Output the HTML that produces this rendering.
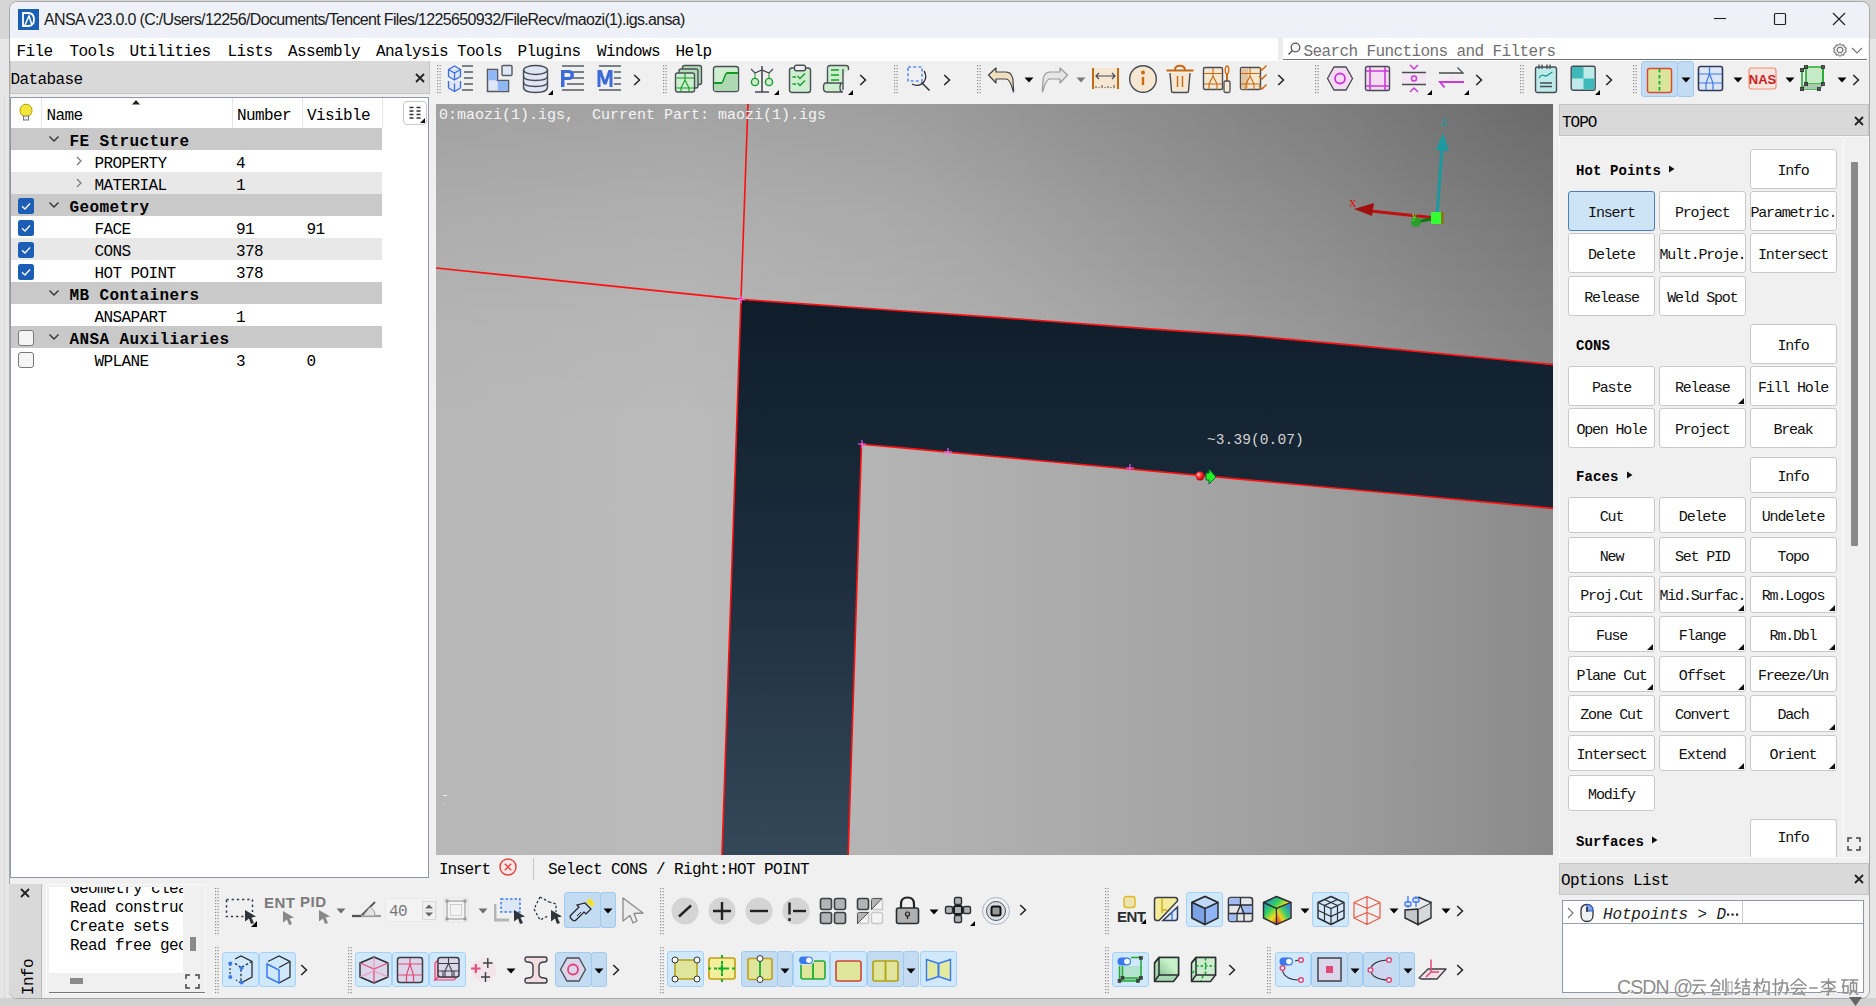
<!DOCTYPE html><html><head><meta charset="utf-8"><style>
*{margin:0;padding:0;box-sizing:border-box}
html,body{width:1876px;height:1006px;overflow:hidden;background:#e6e6e6;position:relative}
div{position:absolute}
.t{white-space:pre;font-family:"Liberation Mono",monospace;font-size:16px;letter-spacing:-0.6px;line-height:20px;color:#000}
.s{white-space:pre;font-family:"Liberation Sans",sans-serif;color:#000}
.b{font-weight:bold}
.btn{background:#fff;border:1px solid #c9c9c9;border-radius:3px;text-align:center;white-space:pre;font-family:"Liberation Mono",monospace;font-size:15px;letter-spacing:-1.2px;color:#111}
.grip{width:3px;background-image:radial-gradient(circle,#9a9a9a 0.8px,transparent 1px);background-size:3px 4px}
</style></head><body><div style="left:0px;top:0px;width:1876px;height:39px;background:#d6d6d6;"></div>
<div style="left:4px;top:95px;width:1px;height:911px;background:#d8d8d8;"></div>
<div style="left:0px;top:998px;width:1876px;height:8px;background:#d2d2d2;"></div>
<div style="left:9px;top:1px;width:1861px;height:998px;background:#f0f0f0;border:1px solid #a9a9a9;border-radius:8px 8px 8px 8px;"></div>
<div style="left:10px;top:2px;width:1858px;height:36px;background:#eef1f7;border-radius:7px 7px 0 0;"></div>
<div style="left:10px;top:38px;width:1858px;height:23px;background:#fff;"></div>
<div style="left:10px;top:61px;width:420px;height:1px;background:#cfcfcf;"></div>
<div style="left:10px;top:61px;width:420px;height:33px;background:#d9d9d9;border:1px solid #c4c4c4;border-top:none;"></div>
<div style="left:10px;top:97px;width:419px;height:781px;background:#fff;border:1px solid #8d97a6;"></div>
<div style="left:430px;top:61px;width:1438px;height:43px;background:#f0f0f0;"></div>
<div style="left:436px;top:104px;width:1117px;height:751px;background:radial-gradient(ellipse 650px 330px at 100% 0%, rgba(0,0,0,0.13), rgba(0,0,0,0) 100%),linear-gradient(to bottom, rgba(0,0,0,0.12) 0px, rgba(0,0,0,0.06) 110px, rgba(0,0,0,0.02) 220px, rgba(0,0,0,0) 320px),linear-gradient(to right, #b7b7b7 0%, #bababa 22%, #b4b4b4 40%, #a9a9a9 60%, #9d9d9d 80%, #8a8a8a 100%);overflow:hidden;"><svg width="1117" height="751" viewBox="0 0 1117 751" style="position:absolute;left:0;top:0;overflow:hidden"><defs><linearGradient id="dk" x1="0" y1="195" x2="0" y2="751" gradientUnits="userSpaceOnUse"><stop offset="0" stop-color="#0f1d2b"/><stop offset="0.5" stop-color="#1d2d3d"/><stop offset="1" stop-color="#34485a"/></linearGradient></defs><polygon points="305.0,195.4 464.0,206.7 564.0,213.6 714.0,224.9 814.0,231.8 914.0,240.9 1117.0,260.6 1126.0,261.5 1126.0,405.3 1117.0,404.4 964.0,390.0 564.0,353.0 464.0,343.6 425.5,340.3 412.2,751.0 412.0,758.0 285.8,758.0 286.0,751.0" fill="url(#dk)" stroke="#ff1010" stroke-width="1.6"/><polyline points="312.0,-1.0 305.0,195.4" fill="none" stroke="#ff1010" stroke-width="1.6"/><polyline points="0.0,164.0 305.0,195.4" fill="none" stroke="#ff1010" stroke-width="1.6"/><path d="M301,195.5H309M305,191.5V199.5" stroke="#ff66ff" stroke-width="1"/><path d="M422,340H430M426,336V344" stroke="#ff66ff" stroke-width="1"/><path d="M508,348H516M512,344V352" stroke="#ff66ff" stroke-width="1"/><path d="M690,364H698M694,360V368" stroke="#ff66ff" stroke-width="1"/><defs><radialGradient id="rs" cx="0.35" cy="0.35" r="0.7"><stop offset="0" stop-color="#ffd0d0"/><stop offset="0.4" stop-color="#ff3030"/><stop offset="1" stop-color="#a00000"/></radialGradient></defs><circle cx="764" cy="372" r="4.5" fill="url(#rs)"/><path d="M770,369L773,369L773,365L780,373L773,380L773,376L770,376Z" fill="#22ee22" stroke="#063" stroke-width="1"/><path d="M1000,114L935,107" stroke="#c01010" stroke-width="3"/><path d="M918,105L938,99L936,112Z" fill="#a01010"/><path d="M1001,112L1006,44" stroke="#1a9aa0" stroke-width="3"/><path d="M1007,29L1013,47L1000,46Z" fill="#1a9aa0"/><path d="M980,118L1000,114" stroke="#0a7a0a" stroke-width="3"/><circle cx="980" cy="118" r="5" fill="#2aa02a"/><rect x="995" y="108" width="12" height="12" fill="#33ff33"/><rect x="1005" y="108" width="3" height="12" fill="#887722"/><text x="913" y="103" font-family="Liberation Serif" font-size="15" fill="#e01010">x</text><text x="1005" y="22" font-family="Liberation Serif" font-size="15" fill="#1a9aa0">z</text><text x="976" y="115" font-family="Liberation Serif" font-size="10" fill="#40ff40">y</text><path d="M7,691.5H11M7,699.5H8" stroke="#f0f0f0" stroke-width="1"/></svg><div class="t" style="left:3px;top:2px;font-size:15px;letter-spacing:0px;color:#f4f4f4">0:maozi(1).igs,  Current Part: maozi(1).igs</div><div class="t" style="left:771px;top:326px;font-size:14.5px;letter-spacing:0.1px;color:#d4d4d4">~3.39(0.07)</div></div>
<div style="left:1559px;top:104px;width:310px;height:32px;background:#d9d9d9;border:1px solid #c4c4c4;"></div>
<div style="left:1559px;top:136px;width:310px;height:722px;background:#f0f0f0;border:1px solid #fafafa;"></div>
<div style="left:1559px;top:863px;width:310px;height:32px;background:#d9d9d9;border:1px solid #c4c4c4;"></div>
<div style="left:1562px;top:900px;width:302px;height:93px;background:#fff;border:1px solid #8d97a6;"></div>
<div style="left:9px;top:884px;width:33px;height:114px;background:#d9d9d9;border-right:1px solid #b9b9b9;border-radius:0 0 0 8px;"></div>
<div style="left:46px;top:884px;width:160px;height:110px;background:#f0f0f0;border:1px solid #fafafa;"></div>
<div style="left:49px;top:887px;width:134px;height:86px;background:#fff;"></div>
<svg style="position:absolute;left:18px;top:9px;" width="21" height="21" viewBox="0 0 21 21"><rect width="21" height="21" fill="#1b5fb5"/><path d="M5,4H10C15,4 16,8 16,10.5C16,13 15,17 10,17H5Z" fill="none" stroke="#fff" stroke-width="1.8"/><path d="M7,16L11,7L14,16" fill="none" stroke="#fff" stroke-width="1.5"/></svg>
<div class="s" style="left:44px;top:9.5px;font-size:16px;letter-spacing:-0.66px;line-height:20px;color:#1a1a1a">ANSA v23.0.0 (C:/Users/12256/Documents/Tencent Files/1225650932/FileRecv/maozi(1).igs.ansa)</div>
<svg style="position:absolute;left:1710px;top:10px;" width="20" height="16" viewBox="0 0 20 16"><path d="M4,8.5H16" stroke="#222" stroke-width="1.1"/></svg>
<svg style="position:absolute;left:1770px;top:9px;" width="20" height="20" viewBox="0 0 20 20"><rect x="4.5" y="4.5" width="11" height="11" rx="1" fill="none" stroke="#222" stroke-width="1.2"/></svg>
<svg style="position:absolute;left:1828px;top:8px;" width="22" height="22" viewBox="0 0 22 22"><path d="M5,5L17,17M17,5L5,17" stroke="#222" stroke-width="1.2"/></svg>
<div class="t" style="left:16.5px;top:41.5px;font-size:16px;letter-spacing:-0.6px;">File</div>
<div class="t" style="left:69.5px;top:41.5px;font-size:16px;letter-spacing:-0.6px;">Tools</div>
<div class="t" style="left:129.5px;top:41.5px;font-size:16px;letter-spacing:-0.6px;">Utilities</div>
<div class="t" style="left:227.5px;top:41.5px;font-size:16px;letter-spacing:-0.6px;">Lists</div>
<div class="t" style="left:288px;top:41.5px;font-size:16px;letter-spacing:-0.6px;">Assembly</div>
<div class="t" style="left:376px;top:41.5px;font-size:16px;letter-spacing:-0.6px;">Analysis Tools</div>
<div class="t" style="left:517.5px;top:41.5px;font-size:16px;letter-spacing:-0.6px;">Plugins</div>
<div class="t" style="left:597px;top:41.5px;font-size:16px;letter-spacing:-0.6px;">Windows</div>
<div class="t" style="left:675.5px;top:41.5px;font-size:16px;letter-spacing:-0.6px;">Help</div>
<div style="left:1278px;top:38px;width:5px;height:22px;background:#ececec;"></div>
<div style="left:1283px;top:39px;width:584px;height:21px;background:#fff;border-bottom:1.5px solid #707070;border-radius:3px 3px 0 0;"></div>
<svg style="position:absolute;left:1286px;top:41px;" width="16" height="16" viewBox="0 0 16 16"><circle cx="9.5" cy="6.5" r="4.3" fill="#f4f6f8" stroke="#555" stroke-width="1.3"/><path d="M6.5,9.5L2.5,13.5" stroke="#555" stroke-width="1.5"/></svg>
<div class="t" style="left:1303.5px;top:42px;font-size:16px;letter-spacing:-0.6px;color:#707070;">Search Functions and Filters</div>
<svg style="position:absolute;left:1832px;top:42px;" width="16" height="16" viewBox="0 0 16 16"><path d="M8,1.5L9.5,3.2L11.8,2.8L12.3,5L14.4,6L13.5,8L14.4,10L12.3,11L11.8,13.2L9.5,12.8L8,14.5L6.5,12.8L4.2,13.2L3.7,11L1.6,10L2.5,8L1.6,6L3.7,5L4.2,2.8L6.5,3.2Z" fill="#e8e8e8" stroke="#666" stroke-width="1"/><circle cx="8" cy="8" r="2.8" fill="#f5f5f5" stroke="#666" stroke-width="1"/></svg>
<svg style="position:absolute;left:1850px;top:43px;" width="14" height="14" viewBox="0 0 14 14"><path d="M2,5L7,10L12,5" fill="none" stroke="#777" stroke-width="1.2"/></svg>
<div class="t" style="left:10.5px;top:70px;font-size:16px;letter-spacing:-0.6px;">Database</div>
<svg style="position:absolute;left:413px;top:71px;" width="14" height="14" viewBox="0 0 14 14"><path d="M3,3L11,11M11,3L3,11" stroke="#222" stroke-width="1.8"/></svg>
<div style="left:41px;top:98px;width:1px;height:30px;background:#e6e6e6;"></div>
<div style="left:232px;top:98px;width:1px;height:30px;background:#e6e6e6;"></div>
<div style="left:302px;top:98px;width:1px;height:30px;background:#e6e6e6;"></div>
<div style="left:382px;top:98px;width:1px;height:30px;background:#e6e6e6;"></div>
<svg style="position:absolute;left:18px;top:103px;" width="16" height="21" viewBox="0 0 16 21"><ellipse cx="8" cy="7.5" rx="6" ry="6.3" fill="#f5e63a" stroke="#b59f10" stroke-width="1"/><rect x="5.5" y="13" width="5" height="4" fill="#eee" stroke="#777" stroke-width="1"/></svg>
<div class="t" style="left:46.5px;top:105.5px;font-size:16px;letter-spacing:-0.6px;">Name</div>
<div class="t" style="left:237px;top:105.5px;font-size:16px;letter-spacing:-0.6px;">Number</div>
<div class="t" style="left:307px;top:105.5px;font-size:16px;letter-spacing:-0.6px;">Visible</div>
<svg style="position:absolute;left:131px;top:99px;" width="10" height="6" viewBox="0 0 10 6"><path d="M1,5.5L5,1L9,5.5Z" fill="#222"/></svg>
<div style="left:403px;top:101px;width:24px;height:24px;background:#fff;border:1px solid #c8c8c8;border-radius:4px;"></div>
<svg style="position:absolute;left:406px;top:104px;" width="20" height="20" viewBox="0 0 20 20"><path d="M3.5,3.5H7.5M3.5,7H7.5M3.5,10.5H7.5M3.5,14H7.5M10.5,3.5H14.5M10.5,7H14.5M10.5,10.5H14.5M10.5,14H14.5" stroke="#333" stroke-width="1.3"/><path d="M19,14L19,19L14,19Z" fill="#111"/></svg>
<div style="left:11px;top:128px;width:371px;height:22px;background:#c9c9c9;"></div>
<svg style="position:absolute;left:47px;top:134px;" width="14" height="10" viewBox="0 0 14 10"><path d="M2.5,2.5L7,7L11.5,2.5" fill="none" stroke="#333" stroke-width="1.4"/></svg>
<div class="t" style="left:69.5px;top:131.5px;font-size:16px;letter-spacing:0.4px;font-weight:bold;">FE Structure</div>
<svg style="position:absolute;left:74px;top:155px;" width="10" height="12" viewBox="0 0 10 12"><path d="M3,2L7,6L3,10" fill="none" stroke="#777" stroke-width="1.2"/></svg>
<div class="t" style="left:94.5px;top:153.5px;font-size:16px;letter-spacing:-0.6px;">PROPERTY</div>
<div class="t" style="left:236px;top:153.5px;font-size:16px;letter-spacing:-0.6px;">4</div>
<div style="left:11px;top:172px;width:371px;height:22px;background:#e8e8e8;"></div>
<svg style="position:absolute;left:74px;top:177px;" width="10" height="12" viewBox="0 0 10 12"><path d="M3,2L7,6L3,10" fill="none" stroke="#777" stroke-width="1.2"/></svg>
<div class="t" style="left:94.5px;top:175.5px;font-size:16px;letter-spacing:-0.6px;">MATERIAL</div>
<div class="t" style="left:236px;top:175.5px;font-size:16px;letter-spacing:-0.6px;">1</div>
<div style="left:11px;top:194px;width:371px;height:22px;background:#c9c9c9;"></div>
<svg style="position:absolute;left:17px;top:197px;" width="18" height="18" viewBox="0 0 18 18"><rect x="1" y="1" width="16" height="16" rx="2.5" fill="#1c5db5"/><path d="M5,9.2L8,12L13,6.5" fill="none" stroke="#fff" stroke-width="1.3"/></svg>
<svg style="position:absolute;left:47px;top:200px;" width="14" height="10" viewBox="0 0 14 10"><path d="M2.5,2.5L7,7L11.5,2.5" fill="none" stroke="#333" stroke-width="1.4"/></svg>
<div class="t" style="left:69.5px;top:197.5px;font-size:16px;letter-spacing:0.4px;font-weight:bold;">Geometry</div>
<svg style="position:absolute;left:17px;top:219px;" width="18" height="18" viewBox="0 0 18 18"><rect x="1" y="1" width="16" height="16" rx="2.5" fill="#1c5db5"/><path d="M5,9.2L8,12L13,6.5" fill="none" stroke="#fff" stroke-width="1.3"/></svg>
<div class="t" style="left:94.5px;top:219.5px;font-size:16px;letter-spacing:-0.6px;">FACE</div>
<div class="t" style="left:236px;top:219.5px;font-size:16px;letter-spacing:-0.6px;">91</div>
<div class="t" style="left:306.5px;top:219.5px;font-size:16px;letter-spacing:-0.6px;">91</div>
<div style="left:11px;top:238px;width:371px;height:22px;background:#e8e8e8;"></div>
<svg style="position:absolute;left:17px;top:241px;" width="18" height="18" viewBox="0 0 18 18"><rect x="1" y="1" width="16" height="16" rx="2.5" fill="#1c5db5"/><path d="M5,9.2L8,12L13,6.5" fill="none" stroke="#fff" stroke-width="1.3"/></svg>
<div class="t" style="left:94.5px;top:241.5px;font-size:16px;letter-spacing:-0.6px;">CONS</div>
<div class="t" style="left:236px;top:241.5px;font-size:16px;letter-spacing:-0.6px;">378</div>
<svg style="position:absolute;left:17px;top:263px;" width="18" height="18" viewBox="0 0 18 18"><rect x="1" y="1" width="16" height="16" rx="2.5" fill="#1c5db5"/><path d="M5,9.2L8,12L13,6.5" fill="none" stroke="#fff" stroke-width="1.3"/></svg>
<div class="t" style="left:94.5px;top:263.5px;font-size:16px;letter-spacing:-0.6px;">HOT POINT</div>
<div class="t" style="left:236px;top:263.5px;font-size:16px;letter-spacing:-0.6px;">378</div>
<div style="left:11px;top:282px;width:371px;height:22px;background:#c9c9c9;"></div>
<svg style="position:absolute;left:47px;top:288px;" width="14" height="10" viewBox="0 0 14 10"><path d="M2.5,2.5L7,7L11.5,2.5" fill="none" stroke="#333" stroke-width="1.4"/></svg>
<div class="t" style="left:69.5px;top:285.5px;font-size:16px;letter-spacing:0.4px;font-weight:bold;">MB Containers</div>
<div class="t" style="left:94.5px;top:307.5px;font-size:16px;letter-spacing:-0.6px;">ANSAPART</div>
<div class="t" style="left:236px;top:307.5px;font-size:16px;letter-spacing:-0.6px;">1</div>
<div style="left:11px;top:326px;width:371px;height:22px;background:#c9c9c9;"></div>
<svg style="position:absolute;left:17px;top:329px;" width="18" height="18" viewBox="0 0 18 18"><rect x="1.5" y="1.5" width="15" height="15" rx="2.5" fill="#f5f5f5" stroke="#7a7a7a" stroke-width="1"/></svg>
<svg style="position:absolute;left:47px;top:332px;" width="14" height="10" viewBox="0 0 14 10"><path d="M2.5,2.5L7,7L11.5,2.5" fill="none" stroke="#333" stroke-width="1.4"/></svg>
<div class="t" style="left:69.5px;top:329.5px;font-size:16px;letter-spacing:0.4px;font-weight:bold;">ANSA Auxiliaries</div>
<svg style="position:absolute;left:17px;top:351px;" width="18" height="18" viewBox="0 0 18 18"><rect x="1.5" y="1.5" width="15" height="15" rx="2.5" fill="#f5f5f5" stroke="#7a7a7a" stroke-width="1"/></svg>
<div class="t" style="left:94.5px;top:351.5px;font-size:16px;letter-spacing:-0.6px;">WPLANE</div>
<div class="t" style="left:236px;top:351.5px;font-size:16px;letter-spacing:-0.6px;">3</div>
<div class="t" style="left:306.5px;top:351.5px;font-size:16px;letter-spacing:-0.6px;">0</div>
<div class="t" style="left:1562px;top:113px;font-size:16px;letter-spacing:-1px;">TOPO</div>
<svg style="position:absolute;left:1852px;top:114px;" width="14" height="14" viewBox="0 0 14 14"><path d="M3,3L11,11M11,3L3,11" stroke="#222" stroke-width="1.8"/></svg>
<div style="left:1561px;top:138px;width:283px;height:717px;border-right:1px solid #fafafa;"></div>
<div style="left:1851px;top:162px;width:7px;height:384px;background:#8a8a8a;border-radius:1px;"></div>
<div class="t" style="left:1576px;top:161px;font-size:14px;letter-spacing:0.1px;font-weight:bold;">Hot Points</div>
<svg style="position:absolute;left:1668.0px;top:164px;" width="8" height="10" viewBox="0 0 8 10"><path d="M1,1.5L6.5,5L1,8.5Z" fill="#111"/></svg>
<div class="btn" style="left:1749.5px;top:148.5px;width:87px;height:40px;line-height:43px;">Info</div>
<div class="btn" style="left:1568px;top:191px;width:87px;height:40px;background:#cde4f7;border-color:#4a7fb5;line-height:43px;">Insert</div>
<div class="btn" style="left:1658.5px;top:191px;width:87.5px;height:40px;line-height:43px;">Project</div>
<div class="btn" style="left:1749.5px;top:191px;width:87px;height:40px;line-height:43px;">Parametric.</div>
<div class="btn" style="left:1568px;top:233px;width:87px;height:40px;line-height:43px;">Delete</div>
<div class="btn" style="left:1658.5px;top:233px;width:87.5px;height:40px;line-height:43px;">Mult.Proje.</div>
<div class="btn" style="left:1749.5px;top:233px;width:87px;height:40px;line-height:43px;">Intersect</div>
<div class="btn" style="left:1568px;top:275.5px;width:87px;height:40px;line-height:43px;">Release</div>
<div class="btn" style="left:1658.5px;top:275.5px;width:87.5px;height:40px;line-height:43px;">Weld Spot</div>
<div class="t" style="left:1576px;top:336px;font-size:14px;letter-spacing:0.1px;font-weight:bold;">CONS</div>
<div class="btn" style="left:1749.5px;top:323.5px;width:87px;height:40px;line-height:43px;">Info</div>
<div class="btn" style="left:1568px;top:366px;width:87px;height:40px;line-height:43px;">Paste</div>
<div class="btn" style="left:1658.5px;top:366px;width:87.5px;height:40px;line-height:43px;">Release</div>
<svg style="position:absolute;left:1737.0px;top:397px;" width="7" height="7" viewBox="0 0 7 7"><path d="M7,1L7,7L1,7Z" fill="#111"/></svg>
<div class="btn" style="left:1749.5px;top:366px;width:87px;height:40px;line-height:43px;">Fill Hole</div>
<div class="btn" style="left:1568px;top:408px;width:87px;height:40px;line-height:43px;">Open Hole</div>
<div class="btn" style="left:1658.5px;top:408px;width:87.5px;height:40px;line-height:43px;">Project</div>
<div class="btn" style="left:1749.5px;top:408px;width:87px;height:40px;line-height:43px;">Break</div>
<div class="t" style="left:1576px;top:467px;font-size:14px;letter-spacing:0.1px;font-weight:bold;">Faces</div>
<svg style="position:absolute;left:1625.5px;top:470px;" width="8" height="10" viewBox="0 0 8 10"><path d="M1,1.5L6.5,5L1,8.5Z" fill="#111"/></svg>
<div class="btn" style="left:1749.5px;top:456.5px;width:87px;height:36.5px;line-height:39.5px;">Info</div>
<div class="btn" style="left:1568px;top:496.5px;width:87px;height:36.5px;line-height:39.5px;">Cut</div>
<div class="btn" style="left:1658.5px;top:496.5px;width:87.5px;height:36.5px;line-height:39.5px;">Delete</div>
<div class="btn" style="left:1749.5px;top:496.5px;width:87px;height:36.5px;line-height:39.5px;">Undelete</div>
<div class="btn" style="left:1568px;top:536.5px;width:87px;height:36.5px;line-height:39.5px;">New</div>
<div class="btn" style="left:1658.5px;top:536.5px;width:87.5px;height:36.5px;line-height:39.5px;">Set PID</div>
<div class="btn" style="left:1749.5px;top:536.5px;width:87px;height:36.5px;line-height:39.5px;">Topo</div>
<div class="btn" style="left:1568px;top:576px;width:87px;height:36.5px;line-height:39.5px;">Proj.Cut</div>
<div class="btn" style="left:1658.5px;top:576px;width:87.5px;height:36.5px;line-height:39.5px;">Mid.Surfac.</div>
<svg style="position:absolute;left:1737.0px;top:603.5px;" width="7" height="7" viewBox="0 0 7 7"><path d="M7,1L7,7L1,7Z" fill="#111"/></svg>
<div class="btn" style="left:1749.5px;top:576px;width:87px;height:36.5px;line-height:39.5px;">Rm.Logos</div>
<svg style="position:absolute;left:1827.5px;top:603.5px;" width="7" height="7" viewBox="0 0 7 7"><path d="M7,1L7,7L1,7Z" fill="#111"/></svg>
<div class="btn" style="left:1568px;top:615.5px;width:87px;height:36.5px;line-height:39.5px;">Fuse</div>
<svg style="position:absolute;left:1646px;top:643.0px;" width="7" height="7" viewBox="0 0 7 7"><path d="M7,1L7,7L1,7Z" fill="#111"/></svg>
<div class="btn" style="left:1658.5px;top:615.5px;width:87.5px;height:36.5px;line-height:39.5px;">Flange</div>
<svg style="position:absolute;left:1737.0px;top:643.0px;" width="7" height="7" viewBox="0 0 7 7"><path d="M7,1L7,7L1,7Z" fill="#111"/></svg>
<div class="btn" style="left:1749.5px;top:615.5px;width:87px;height:36.5px;line-height:39.5px;">Rm.Dbl</div>
<svg style="position:absolute;left:1827.5px;top:643.0px;" width="7" height="7" viewBox="0 0 7 7"><path d="M7,1L7,7L1,7Z" fill="#111"/></svg>
<div class="btn" style="left:1568px;top:655.5px;width:87px;height:36.5px;line-height:39.5px;">Plane Cut</div>
<svg style="position:absolute;left:1646px;top:683.0px;" width="7" height="7" viewBox="0 0 7 7"><path d="M7,1L7,7L1,7Z" fill="#111"/></svg>
<div class="btn" style="left:1658.5px;top:655.5px;width:87.5px;height:36.5px;line-height:39.5px;">Offset</div>
<svg style="position:absolute;left:1737.0px;top:683.0px;" width="7" height="7" viewBox="0 0 7 7"><path d="M7,1L7,7L1,7Z" fill="#111"/></svg>
<div class="btn" style="left:1749.5px;top:655.5px;width:87px;height:36.5px;line-height:39.5px;">Freeze/Un</div>
<div class="btn" style="left:1568px;top:695px;width:87px;height:36.5px;line-height:39.5px;">Zone Cut</div>
<div class="btn" style="left:1658.5px;top:695px;width:87.5px;height:36.5px;line-height:39.5px;">Convert</div>
<div class="btn" style="left:1749.5px;top:695px;width:87px;height:36.5px;line-height:39.5px;">Dach</div>
<svg style="position:absolute;left:1827.5px;top:722.5px;" width="7" height="7" viewBox="0 0 7 7"><path d="M7,1L7,7L1,7Z" fill="#111"/></svg>
<div class="btn" style="left:1568px;top:734.5px;width:87px;height:36.5px;line-height:39.5px;">Intersect</div>
<div class="btn" style="left:1658.5px;top:734.5px;width:87.5px;height:36.5px;line-height:39.5px;">Extend</div>
<svg style="position:absolute;left:1737.0px;top:762.0px;" width="7" height="7" viewBox="0 0 7 7"><path d="M7,1L7,7L1,7Z" fill="#111"/></svg>
<div class="btn" style="left:1749.5px;top:734.5px;width:87px;height:36.5px;line-height:39.5px;">Orient</div>
<svg style="position:absolute;left:1827.5px;top:762.0px;" width="7" height="7" viewBox="0 0 7 7"><path d="M7,1L7,7L1,7Z" fill="#111"/></svg>
<div class="btn" style="left:1568px;top:774.5px;width:87px;height:36.5px;line-height:39.5px;">Modify</div>
<div class="t" style="left:1576px;top:832px;font-size:14px;letter-spacing:0.1px;font-weight:bold;">Surfaces</div>
<svg style="position:absolute;left:1651.0px;top:835px;" width="8" height="10" viewBox="0 0 8 10"><path d="M1,1.5L6.5,5L1,8.5Z" fill="#111"/></svg>
<div class="btn" style="left:1749.5px;top:819px;width:87px;height:38px;border-bottom:none;border-radius:3px 3px 0 0;line-height:38px;">Info</div>
<svg style="position:absolute;left:1846px;top:836px;" width="16" height="16" viewBox="0 0 16 16"><path d="M2,6V2H6M10,2H14V6M14,10V14H10M6,14H2V10" fill="none" stroke="#444" stroke-width="1.5"/></svg>
<div class="t" style="left:1561px;top:871px;font-size:16px;letter-spacing:-0.6px;">Options List</div>
<svg style="position:absolute;left:1852px;top:872px;" width="14" height="14" viewBox="0 0 14 14"><path d="M3,3L11,11M11,3L3,11" stroke="#222" stroke-width="1.8"/></svg>
<div style="left:1563px;top:901px;width:300px;height:23px;border-bottom:1px solid #9aa3b0;"></div>
<div style="left:1742px;top:901px;width:1px;height:23px;background:#c8c8c8;"></div>
<svg style="position:absolute;left:1565px;top:906px;" width="10" height="14" viewBox="0 0 10 14"><path d="M3,2L8,7L3,12" fill="none" stroke="#777" stroke-width="1.2"/></svg>
<svg style="position:absolute;left:1578px;top:903px;" width="18" height="20" viewBox="0 0 18 20"><path d="M9,1.5C5,1.5 3,4 3,8V12C3,16 5.5,18.5 9,18.5C12.5,18.5 15,16 15,12V8C15,4 13,1.5 9,1.5Z" fill="#eef0f4" stroke="#333" stroke-width="1.3"/><path d="M9,1.5C12.5,1.5 15,4 15,8H9Z" fill="#7aa2f0" stroke="#2a5ad0" stroke-width="1"/><path d="M9,4V9" stroke="#333" stroke-width="1.6"/></svg>
<div class="t" style="left:1603px;top:904.5px;font-style:italic;font-size:16px;letter-spacing:-0.15px;color:#222">Hotpoints &gt; D</div>
<svg style="position:absolute;left:1726px;top:912px;" width="16" height="6" viewBox="0 0 16 6"><g fill="#222"><rect x="1" y="1.5" width="2.2" height="2.2"/><rect x="5.5" y="1.5" width="2.2" height="2.2"/><rect x="10" y="1.5" width="2.2" height="2.2"/></g></svg>
<div class="t" style="left:439px;top:860px;font-size:16px;letter-spacing:-1.1px;">Insert</div>
<svg style="position:absolute;left:498px;top:857px;" width="20" height="20" viewBox="0 0 20 20"><circle cx="10" cy="10" r="8" fill="#fde8e8" stroke="#e04848" stroke-width="1.5"/><path d="M6.8,6.8L13.2,13.2M13.2,6.8L6.8,13.2" stroke="#e04848" stroke-width="1.5"/></svg>
<div style="left:533px;top:858px;width:1px;height:22px;background:#c8c8c8;"></div>
<div class="t" style="left:548px;top:860px;font-size:16px;letter-spacing:-0.6px;">Select CONS / Right:HOT POINT</div>
<svg style="position:absolute;left:18px;top:886px;" width="14" height="14" viewBox="0 0 14 14"><path d="M3,3L11,11M11,3L3,11" stroke="#222" stroke-width="1.8"/></svg>
<div class="t" style="left:19px;top:995px;transform:rotate(-90deg);transform-origin:0 0;font-size:16px;letter-spacing:-0.6px">Info</div>
<div style="left:49px;top:887px;width:134px;height:86px;overflow:hidden"><div class="t" style="left:21px;top:-7.5px;line-height:19px">Geometry clean
Read construction
Create sets
Read free geometry</div></div>
<div style="left:190px;top:937px;width:6px;height:14px;background:#8a8a8a;"></div>
<div style="left:70px;top:978px;width:13px;height:6px;background:#8a8a8a;"></div>
<svg style="position:absolute;left:184px;top:973px;" width="18" height="18" viewBox="0 0 18 18"><path d="M2,6V2H6M11,2H15V6M15,11V15H11M6,15H2V11" fill="none" stroke="#444" stroke-width="1.5"/></svg>
<div style="left:49px;top:992px;width:156px;height:1px;background:#777;"></div>
<svg style="position:absolute;left:437.4px;top:65px;" width="4" height="30" viewBox="0 0 4 30"><g fill="#8c8c8c"><rect x="0" y="0" width="1.2" height="1.2"/><rect x="2.5" y="0" width="1.2" height="1.2"/><rect x="0" y="3" width="1.2" height="1.2"/><rect x="2.5" y="3" width="1.2" height="1.2"/><rect x="0" y="6" width="1.2" height="1.2"/><rect x="2.5" y="6" width="1.2" height="1.2"/><rect x="0" y="9" width="1.2" height="1.2"/><rect x="2.5" y="9" width="1.2" height="1.2"/><rect x="0" y="12" width="1.2" height="1.2"/><rect x="2.5" y="12" width="1.2" height="1.2"/><rect x="0" y="15" width="1.2" height="1.2"/><rect x="2.5" y="15" width="1.2" height="1.2"/><rect x="0" y="18" width="1.2" height="1.2"/><rect x="2.5" y="18" width="1.2" height="1.2"/><rect x="0" y="21" width="1.2" height="1.2"/><rect x="2.5" y="21" width="1.2" height="1.2"/><rect x="0" y="24" width="1.2" height="1.2"/><rect x="2.5" y="24" width="1.2" height="1.2"/><rect x="0" y="27" width="1.2" height="1.2"/><rect x="2.5" y="27" width="1.2" height="1.2"/></g></svg>
<svg style="position:absolute;left:447px;top:64px;" width="28" height="30" viewBox="0 0 28 30"><g stroke="#3a6de0" stroke-width="1.3" fill="#dfe7f6"><path d="M1.5,5.5L7.5,2L13.5,5.5V12.5L7.5,16L1.5,12.5Z"/><path d="M1.5,5.5L7.5,9L13.5,5.5M7.5,9V16" fill="none"/><path d="M1.5,17V24L7.5,27.5L13.5,24V17" /><path d="M7.5,19.5V27.5" fill="none"/></g><g stroke="#555a60" stroke-width="1.4"><path d="M15,2H26M17,8H26M17,14H26M17,20H26M15,26H26"/></g></svg>
<svg style="position:absolute;left:486px;top:64px;" width="28" height="30" viewBox="0 0 28 30"><rect x="16" y="1.5" width="10" height="10" rx="1" fill="#dfe7f6" stroke="#555a60" stroke-width="1.4"/><path d="M1.5,5.5H11.5V16.5H22.5V27.5H1.5Z" fill="#dfe7f6" stroke="#555a60" stroke-width="1.5"/><rect x="2.3" y="6.3" width="8.5" height="10" fill="#8fb6f5"/><rect x="11.8" y="17" width="10" height="9.8" fill="#8fb6f5"/></svg>
<svg style="position:absolute;left:522px;top:64px;" width="32" height="32" viewBox="0 0 32 32"><g fill="#dfe7f6" stroke="#474c52" stroke-width="1.4"><path d="M1.5,6V23C1.5,26.5 6.5,28.5 13.5,28.5C20.5,28.5 25.5,26.5 25.5,23V6"/><ellipse cx="13.5" cy="6" rx="12" ry="4.5"/><path d="M1.5,12C1.5,15 6.5,16.5 13.5,16.5C20.5,16.5 25.5,15 25.5,12M1.5,18C1.5,21 6.5,22.5 13.5,22.5C20.5,22.5 25.5,21 25.5,18" fill="none"/></g><path d="M31,26V31H26Z" fill="#000"/></svg>
<svg style="position:absolute;left:559px;top:64px;" width="28" height="30" viewBox="0 0 28 30"><g stroke="#555a60" stroke-width="1.5"><path d="M3,2H25M13,8H25M13,14H25M8,20H25M3,26H25"/></g><path d="M2,23V6H9C13,6 15,8 15,11C15,14 13,16 9,16H5.5V23Z M5.5,9V13H9C11,13 11.5,12 11.5,11C11.5,10 11,9 9,9Z" fill="#3c6bd8" fill-rule="evenodd"/></svg>
<svg style="position:absolute;left:596px;top:64px;" width="28" height="30" viewBox="0 0 28 30"><g stroke="#555a60" stroke-width="1.5"><path d="M3,2H25M18,8H25M18,14H25M18,20H25M3,26H25"/></g><path d="M1.5,23V6H5.5L9,16L12.5,6H16.5V23H13.5V12L10.5,20.5H7.5L4.5,12V23Z" fill="#3c6bd8"/></svg>
<svg style="position:absolute;left:633px;top:74px;" width="8" height="12" viewBox="0 0 8 12"><path d="M1.2,1L6.5,6L1.2,11" fill="none" stroke="#222" stroke-width="1.5"/></svg>
<svg style="position:absolute;left:663.4px;top:65px;" width="4" height="30" viewBox="0 0 4 30"><g fill="#8c8c8c"><rect x="0" y="0" width="1.2" height="1.2"/><rect x="2.5" y="0" width="1.2" height="1.2"/><rect x="0" y="3" width="1.2" height="1.2"/><rect x="2.5" y="3" width="1.2" height="1.2"/><rect x="0" y="6" width="1.2" height="1.2"/><rect x="2.5" y="6" width="1.2" height="1.2"/><rect x="0" y="9" width="1.2" height="1.2"/><rect x="2.5" y="9" width="1.2" height="1.2"/><rect x="0" y="12" width="1.2" height="1.2"/><rect x="2.5" y="12" width="1.2" height="1.2"/><rect x="0" y="15" width="1.2" height="1.2"/><rect x="2.5" y="15" width="1.2" height="1.2"/><rect x="0" y="18" width="1.2" height="1.2"/><rect x="2.5" y="18" width="1.2" height="1.2"/><rect x="0" y="21" width="1.2" height="1.2"/><rect x="2.5" y="21" width="1.2" height="1.2"/><rect x="0" y="24" width="1.2" height="1.2"/><rect x="2.5" y="24" width="1.2" height="1.2"/><rect x="0" y="27" width="1.2" height="1.2"/><rect x="2.5" y="27" width="1.2" height="1.2"/></g></svg>
<svg style="position:absolute;left:674px;top:64px;" width="30" height="30" viewBox="0 0 30 30"><g stroke="#4a4f55" stroke-width="1.4" fill="#b4dcb8"><rect x="8.5" y="1.5" width="19" height="19" rx="2"/><rect x="5" y="5" width="19" height="19" rx="2"/></g><rect x="1.5" y="9" width="19" height="19" rx="2" fill="#cdeecf" stroke="#4a4f55" stroke-width="1.4"/><g stroke="#1a9a2c" stroke-width="1.1" fill="none"><path d="M2,14H20M2,24H20M11,9V16L7,24V28M11,16L15,24V28"/></g></svg>
<svg style="position:absolute;left:712px;top:65px;" width="28" height="28" viewBox="0 0 28 28"><rect x="1.5" y="1.5" width="25" height="25" rx="2.5" fill="#cdeecf" stroke="#4a4f55" stroke-width="1.4"/><path d="M2.2,18H9.5C12,18 12.5,8 15.5,8H26" fill="none" stroke="#0f9a22" stroke-width="1.8"/><path d="M2.2,18.9H9.5C12.5,18.9 13,8.9 15.5,8.9H25.8V25.8H2.2Z" fill="#acd8b2"/></svg>
<svg style="position:absolute;left:748px;top:64px;" width="32" height="32" viewBox="0 0 32 32"><path d="M14,2V28M7,28H21" stroke="#474c52" stroke-width="1.6"/><path d="M3,5L7,9L14,6L21,9L25,5" fill="none" stroke="#474c52" stroke-width="1.2"/><path d="M7,9V14M21,9V14" stroke="#1a9a2c" stroke-width="1"/><circle cx="7" cy="18" r="3.6" fill="#cdeecf" stroke="#1a9a2c" stroke-width="1.4"/><circle cx="21" cy="18" r="3.6" fill="#cdeecf" stroke="#1a9a2c" stroke-width="1.4"/><path d="M31,26V31H26Z" fill="#000"/></svg>
<svg style="position:absolute;left:788px;top:64px;" width="24" height="30" viewBox="0 0 24 30"><rect x="1.5" y="4" width="21" height="24.5" rx="2.5" fill="#cdeecf" stroke="#4a4f55" stroke-width="1.4"/><rect x="6.5" y="1.2" width="11" height="5.5" rx="2" fill="#f0f0f0" stroke="#4a4f55" stroke-width="1.4"/><path d="M4.5,13H8M4.5,20H8" stroke="#1a9a2c" stroke-width="1.4"/><path d="M9.5,12L12,14.5L17,9.5M9.5,19L12,21.5L17,16.5" fill="none" stroke="#1a9a2c" stroke-width="1.4"/></svg>
<svg style="position:absolute;left:822px;top:64px;" width="32" height="32" viewBox="0 0 32 32"><path d="M5.5,24V4C5.5,2.5 6.5,1.5 8,1.5H24C25.5,1.5 26.5,2.5 26.5,4V6" fill="#cdeecf" stroke="#4a4f55" stroke-width="1.4"/><path d="M5.5,4H21V25" fill="#cdeecf" stroke="none"/><path d="M3.5,19H20.5C19,19 18,20.5 18,23.5C18,26.5 19.5,28 21,28H4.5C2.5,28 1.5,26.5 1.5,23.5C1.5,20.5 2.5,19 3.5,19Z" fill="#cdeecf" stroke="#4a4f55" stroke-width="1.4"/><path d="M21,5V26" stroke="#4a4f55" stroke-width="1.4"/><path d="M9,6H17M9,11H17M9,16H17" stroke="#1a9a2c" stroke-width="1.4"/><path d="M31,26V31H26Z" fill="#000"/></svg>
<svg style="position:absolute;left:859px;top:74px;" width="8" height="12" viewBox="0 0 8 12"><path d="M1.2,1L6.5,6L1.2,11" fill="none" stroke="#222" stroke-width="1.5"/></svg>
<svg style="position:absolute;left:894.4px;top:65px;" width="4" height="30" viewBox="0 0 4 30"><g fill="#8c8c8c"><rect x="0" y="0" width="1.2" height="1.2"/><rect x="2.5" y="0" width="1.2" height="1.2"/><rect x="0" y="3" width="1.2" height="1.2"/><rect x="2.5" y="3" width="1.2" height="1.2"/><rect x="0" y="6" width="1.2" height="1.2"/><rect x="2.5" y="6" width="1.2" height="1.2"/><rect x="0" y="9" width="1.2" height="1.2"/><rect x="2.5" y="9" width="1.2" height="1.2"/><rect x="0" y="12" width="1.2" height="1.2"/><rect x="2.5" y="12" width="1.2" height="1.2"/><rect x="0" y="15" width="1.2" height="1.2"/><rect x="2.5" y="15" width="1.2" height="1.2"/><rect x="0" y="18" width="1.2" height="1.2"/><rect x="2.5" y="18" width="1.2" height="1.2"/><rect x="0" y="21" width="1.2" height="1.2"/><rect x="2.5" y="21" width="1.2" height="1.2"/><rect x="0" y="24" width="1.2" height="1.2"/><rect x="2.5" y="24" width="1.2" height="1.2"/><rect x="0" y="27" width="1.2" height="1.2"/><rect x="2.5" y="27" width="1.2" height="1.2"/></g></svg>
<svg style="position:absolute;left:906px;top:65px;" width="28" height="28" viewBox="0 0 28 28"><rect x="2" y="2" width="14" height="14" fill="none" stroke="#5b8df0" stroke-width="1.6" stroke-dasharray="3,2.2"/><path d="M18,6A9,9 0 0 1 6,19" fill="none" stroke="#2a2d30" stroke-width="1.3"/><path d="M15.5,17.5L23.5,25.5" stroke="#2a2d30" stroke-width="1.5"/></svg>
<svg style="position:absolute;left:943px;top:74px;" width="8" height="12" viewBox="0 0 8 12"><path d="M1.2,1L6.5,6L1.2,11" fill="none" stroke="#222" stroke-width="1.5"/></svg>
<svg style="position:absolute;left:977.4px;top:65px;" width="4" height="30" viewBox="0 0 4 30"><g fill="#8c8c8c"><rect x="0" y="0" width="1.2" height="1.2"/><rect x="2.5" y="0" width="1.2" height="1.2"/><rect x="0" y="3" width="1.2" height="1.2"/><rect x="2.5" y="3" width="1.2" height="1.2"/><rect x="0" y="6" width="1.2" height="1.2"/><rect x="2.5" y="6" width="1.2" height="1.2"/><rect x="0" y="9" width="1.2" height="1.2"/><rect x="2.5" y="9" width="1.2" height="1.2"/><rect x="0" y="12" width="1.2" height="1.2"/><rect x="2.5" y="12" width="1.2" height="1.2"/><rect x="0" y="15" width="1.2" height="1.2"/><rect x="2.5" y="15" width="1.2" height="1.2"/><rect x="0" y="18" width="1.2" height="1.2"/><rect x="2.5" y="18" width="1.2" height="1.2"/><rect x="0" y="21" width="1.2" height="1.2"/><rect x="2.5" y="21" width="1.2" height="1.2"/><rect x="0" y="24" width="1.2" height="1.2"/><rect x="2.5" y="24" width="1.2" height="1.2"/><rect x="0" y="27" width="1.2" height="1.2"/><rect x="2.5" y="27" width="1.2" height="1.2"/></g></svg>
<svg style="position:absolute;left:987px;top:67px;" width="30" height="26" viewBox="0 0 30 26"><path d="M1.5,8L9,1V5H19C24,5 26,10 26,14C26,18 27,23 26.5,25C25,22 24,12 19,12H9V16Z" fill="#f2dfbf" stroke="#3f4246" stroke-width="1.2" stroke-linejoin="round"/></svg>
<svg style="position:absolute;left:1024px;top:77px;" width="10" height="6" viewBox="0 0 10 6"><path d="M0.5,0.5H9.5L5,5.5Z" fill="#000"/></svg>
<svg style="position:absolute;left:1039px;top:67px;" width="30" height="26" viewBox="0 0 30 26"><path d="M28.5,8L21,1V5H11C6,5 4,10 4,14C4,18 3,23 3.5,25C5,22 6,12 11,12H21V16Z" fill="#e6e6e6" stroke="#9a9a9a" stroke-width="1.2" stroke-linejoin="round"/></svg>
<svg style="position:absolute;left:1076px;top:77px;" width="10" height="6" viewBox="0 0 10 6"><path d="M0.5,0.5H9.5L5,5.5Z" fill="#7a7a7a"/></svg>
<svg style="position:absolute;left:1091px;top:67px;" width="30" height="24" viewBox="0 0 30 24"><rect x="2" y="1" width="25" height="21" fill="#f5e7d2"/><path d="M2,1V22M27,1V22" stroke="#c9690f" stroke-width="2"/><path d="M5,9H24M8,6L5,9L8,12M21,6L24,9L21,12" fill="none" stroke="#474c52" stroke-width="1.2"/><path d="M5,21V19M8,21V20M11,21V18M14,21V20M17,21V19M20,21V20M23,21V18" stroke="#474c52" stroke-width="1"/></svg>
<svg style="position:absolute;left:1128px;top:64px;" width="30" height="30" viewBox="0 0 30 30"><circle cx="15" cy="15" r="13.3" fill="#f5e7d2" stroke="#474c52" stroke-width="1.4"/><circle cx="15" cy="8.5" r="2" fill="#c9690f"/><path d="M15,13V21" stroke="#c9690f" stroke-width="2.4"/></svg>
<svg style="position:absolute;left:1165px;top:64px;" width="30" height="30" viewBox="0 0 30 30"><path d="M5,9L6.5,27C6.5,28 7,28.5 8,28.5H22C23,28.5 23.5,28 23.5,27L25,9" fill="#f5e7d2" stroke="#474c52" stroke-width="1.4"/><path d="M1.5,6.5H28.5" stroke="#c9690f" stroke-width="2"/><path d="M10,6.5C10,3 11.5,1.8 15,1.8C18.5,1.8 20,3 20,6.5" fill="none" stroke="#c9690f" stroke-width="2"/><path d="M12.5,12V23M17.5,12V23" stroke="#c9690f" stroke-width="1.4"/></svg>
<svg style="position:absolute;left:1202px;top:64px;" width="30" height="30" viewBox="0 0 30 30"><rect x="1.5" y="3.5" width="19" height="22" rx="1.5" fill="#f5e7d2" stroke="#474c52" stroke-width="1.4"/><path d="M2,9.5H20M2,20H20M11,4V12L7,20V25.5M11,12L15,20V25.5" fill="none" stroke="#c9690f" stroke-width="1.1"/><path d="M25,2V17" stroke="#c9690f" stroke-width="2"/><ellipse cx="25" cy="6" rx="1.8" ry="4" fill="#f5e7d2" stroke="#c9690f" stroke-width="1.3"/><rect x="22" y="17" width="6" height="11.5" rx="1.5" fill="#f5e7d2" stroke="#474c52" stroke-width="1.3"/></svg>
<svg style="position:absolute;left:1239px;top:64px;" width="30" height="30" viewBox="0 0 30 30"><rect x="1.5" y="3.5" width="20" height="22" rx="1.5" fill="#f5e7d2" stroke="#474c52" stroke-width="1.4"/><rect x="2.2" y="4.2" width="7" height="21" fill="#e3c4a0"/><path d="M2,9.5H21M2,20H21M11,4V12L7,20V25.5M11,12L15,20V25.5" fill="none" stroke="#c9690f" stroke-width="1.1"/><path d="M20,3L23,6L27.5,1.5M20,12L23,15L27.5,10.5M20,22L23,25L27.5,20.5" fill="none" stroke="#c9690f" stroke-width="1.5"/></svg>
<svg style="position:absolute;left:1277px;top:74px;" width="8" height="12" viewBox="0 0 8 12"><path d="M1.2,1L6.5,6L1.2,11" fill="none" stroke="#222" stroke-width="1.5"/></svg>
<svg style="position:absolute;left:1315.4px;top:65px;" width="4" height="30" viewBox="0 0 4 30"><g fill="#8c8c8c"><rect x="0" y="0" width="1.2" height="1.2"/><rect x="2.5" y="0" width="1.2" height="1.2"/><rect x="0" y="3" width="1.2" height="1.2"/><rect x="2.5" y="3" width="1.2" height="1.2"/><rect x="0" y="6" width="1.2" height="1.2"/><rect x="2.5" y="6" width="1.2" height="1.2"/><rect x="0" y="9" width="1.2" height="1.2"/><rect x="2.5" y="9" width="1.2" height="1.2"/><rect x="0" y="12" width="1.2" height="1.2"/><rect x="2.5" y="12" width="1.2" height="1.2"/><rect x="0" y="15" width="1.2" height="1.2"/><rect x="2.5" y="15" width="1.2" height="1.2"/><rect x="0" y="18" width="1.2" height="1.2"/><rect x="2.5" y="18" width="1.2" height="1.2"/><rect x="0" y="21" width="1.2" height="1.2"/><rect x="2.5" y="21" width="1.2" height="1.2"/><rect x="0" y="24" width="1.2" height="1.2"/><rect x="2.5" y="24" width="1.2" height="1.2"/><rect x="0" y="27" width="1.2" height="1.2"/><rect x="2.5" y="27" width="1.2" height="1.2"/></g></svg>
<svg style="position:absolute;left:1326px;top:65px;" width="28" height="28" viewBox="0 0 28 28"><path d="M1.5,13.5L8,2H20L26.5,13.5L20,25H8Z" fill="#f6dcf3" stroke="#474c52" stroke-width="1.3"/><circle cx="14" cy="13.5" r="5" fill="none" stroke="#c93ad6" stroke-width="1.8"/></svg>
<svg style="position:absolute;left:1364px;top:65px;" width="28" height="28" viewBox="0 0 28 28"><rect x="1.5" y="1.5" width="24" height="24" rx="2" fill="#f6dcf3" stroke="#474c52" stroke-width="1.4"/><path d="M6,2V25M21,2V25M2,6H25M2,21H25" stroke="#c93ad6" stroke-width="1.6"/></svg>
<svg style="position:absolute;left:1401px;top:64px;" width="32" height="32" viewBox="0 0 32 32"><rect x="1" y="10" width="24" height="10" fill="#f6e6f4"/><path d="M1,8.5H25M1,20.5H25" stroke="#474c52" stroke-width="1.3"/><circle cx="13" cy="14.5" r="2.5" fill="none" stroke="#c93ad6" stroke-width="1.5"/><path d="M9,1L13,5L17,1M9,28L13,24L17,28" fill="none" stroke="#c93ad6" stroke-width="1.5"/><path d="M31,26V31H26Z" fill="#000"/></svg>
<svg style="position:absolute;left:1438px;top:65px;" width="32" height="31" viewBox="0 0 32 31"><path d="M14,10L25,15H3Z" fill="#f6e6f4"/><path d="M1,8H25L19.5,2.5" fill="none" stroke="#474c52" stroke-width="1.3"/><path d="M26,17H2L6.5,22.5" fill="none" stroke="#c93ad6" stroke-width="1.9"/><path d="M31,25V30H26Z" fill="#000"/></svg>
<svg style="position:absolute;left:1475px;top:74px;" width="8" height="12" viewBox="0 0 8 12"><path d="M1.2,1L6.5,6L1.2,11" fill="none" stroke="#222" stroke-width="1.5"/></svg>
<svg style="position:absolute;left:1520.4px;top:65px;" width="4" height="30" viewBox="0 0 4 30"><g fill="#8c8c8c"><rect x="0" y="0" width="1.2" height="1.2"/><rect x="2.5" y="0" width="1.2" height="1.2"/><rect x="0" y="3" width="1.2" height="1.2"/><rect x="2.5" y="3" width="1.2" height="1.2"/><rect x="0" y="6" width="1.2" height="1.2"/><rect x="2.5" y="6" width="1.2" height="1.2"/><rect x="0" y="9" width="1.2" height="1.2"/><rect x="2.5" y="9" width="1.2" height="1.2"/><rect x="0" y="12" width="1.2" height="1.2"/><rect x="2.5" y="12" width="1.2" height="1.2"/><rect x="0" y="15" width="1.2" height="1.2"/><rect x="2.5" y="15" width="1.2" height="1.2"/><rect x="0" y="18" width="1.2" height="1.2"/><rect x="2.5" y="18" width="1.2" height="1.2"/><rect x="0" y="21" width="1.2" height="1.2"/><rect x="2.5" y="21" width="1.2" height="1.2"/><rect x="0" y="24" width="1.2" height="1.2"/><rect x="2.5" y="24" width="1.2" height="1.2"/><rect x="0" y="27" width="1.2" height="1.2"/><rect x="2.5" y="27" width="1.2" height="1.2"/></g></svg>
<svg style="position:absolute;left:1534px;top:64px;" width="25" height="30" viewBox="0 0 25 30"><rect x="1.5" y="3" width="21" height="25.5" rx="2" fill="#bfeaea" stroke="#474c52" stroke-width="1.4"/><path d="M5,0.5V5M8,0.5V5M13,0.5V5M16,0.5V5" stroke="#474c52" stroke-width="1.3"/><path d="M5,14C8,9 10,12 12,12C14,12 16,9 18.5,8" fill="none" stroke="#1a9a9a" stroke-width="1.3"/><path d="M6,19H18M6,22.5H18" stroke="#474c52" stroke-width="1.3"/></svg>
<svg style="position:absolute;left:1570px;top:65px;" width="32" height="32" viewBox="0 0 32 32"><rect x="1.2" y="1.2" width="24" height="24" rx="2" fill="#bfeaea" stroke="#474c52" stroke-width="1.4"/><rect x="2" y="2" width="11.5" height="11.5" fill="#3fb9b9"/><rect x="13.5" y="13.5" width="11" height="11" fill="#3fb9b9"/><path d="M30,25V30H25Z" fill="#000"/></svg>
<svg style="position:absolute;left:1605px;top:74px;" width="8" height="12" viewBox="0 0 8 12"><path d="M1.2,1L6.5,6L1.2,11" fill="none" stroke="#222" stroke-width="1.5"/></svg>
<svg style="position:absolute;left:1633.4px;top:65px;" width="4" height="30" viewBox="0 0 4 30"><g fill="#8c8c8c"><rect x="0" y="0" width="1.2" height="1.2"/><rect x="2.5" y="0" width="1.2" height="1.2"/><rect x="0" y="3" width="1.2" height="1.2"/><rect x="2.5" y="3" width="1.2" height="1.2"/><rect x="0" y="6" width="1.2" height="1.2"/><rect x="2.5" y="6" width="1.2" height="1.2"/><rect x="0" y="9" width="1.2" height="1.2"/><rect x="2.5" y="9" width="1.2" height="1.2"/><rect x="0" y="12" width="1.2" height="1.2"/><rect x="2.5" y="12" width="1.2" height="1.2"/><rect x="0" y="15" width="1.2" height="1.2"/><rect x="2.5" y="15" width="1.2" height="1.2"/><rect x="0" y="18" width="1.2" height="1.2"/><rect x="2.5" y="18" width="1.2" height="1.2"/><rect x="0" y="21" width="1.2" height="1.2"/><rect x="2.5" y="21" width="1.2" height="1.2"/><rect x="0" y="24" width="1.2" height="1.2"/><rect x="2.5" y="24" width="1.2" height="1.2"/><rect x="0" y="27" width="1.2" height="1.2"/><rect x="2.5" y="27" width="1.2" height="1.2"/></g></svg>
<div style="left:1641px;top:61px;width:37px;height:36px;background:#c3dcf2;border:1px solid #9fcaf3;border-radius:3px;"></div>
<div style="left:1677px;top:61px;width:17px;height:36px;background:#c3dcf2;border:1px solid #9fcaf3;border-radius:3px;"></div>
<svg style="position:absolute;left:1646px;top:67px;" width="28" height="28" viewBox="0 0 28 28"><rect x="1.5" y="1.5" width="24" height="24" rx="2" fill="#dbe49b" stroke="#d94b30" stroke-width="1.5"/><path d="M13.5,2V26" stroke="#10b030" stroke-width="1.8" stroke-dasharray="3.5,2.5"/></svg>
<svg style="position:absolute;left:1681px;top:77px;" width="10" height="6" viewBox="0 0 10 6"><path d="M0.5,0.5H9.5L5,5.5Z" fill="#000"/></svg>
<svg style="position:absolute;left:1697px;top:65px;" width="28" height="28" viewBox="0 0 28 28"><rect x="1.5" y="1.5" width="24" height="24" rx="2" fill="#dde6f6" stroke="#2f3a57" stroke-width="1.6"/><path d="M2,9H25M2,18H25M12.5,2V9L9,18V25M12.5,9L16,18V25" fill="none" stroke="#3c78e8" stroke-width="1.2"/></svg>
<svg style="position:absolute;left:1733px;top:77px;" width="10" height="6" viewBox="0 0 10 6"><path d="M0.5,0.5H9.5L5,5.5Z" fill="#000"/></svg>
<svg style="position:absolute;left:1748px;top:67px;" width="30" height="24" viewBox="0 0 30 24"><rect x="1" y="1" width="27" height="21" rx="2.5" fill="#f6e4df" stroke="#f0907a" stroke-width="1.2"/><text x="14.5" y="17" text-anchor="middle" font-family="Liberation Sans" font-weight="bold" font-size="13" fill="#c92020">NAS</text></svg>
<svg style="position:absolute;left:1785px;top:77px;" width="10" height="6" viewBox="0 0 10 6"><path d="M0.5,0.5H9.5L5,5.5Z" fill="#000"/></svg>
<svg style="position:absolute;left:1800px;top:64px;" width="30" height="30" viewBox="0 0 30 30"><path d="M6,3H23V20H6Z" fill="#c6e9c6"/><path d="M2,6V25H19L23,20V3" fill="none" stroke="#22aa33" stroke-width="1.6"/><path d="M6,3H23V20H6Z M6,3L2,6 M6,20L2,25" fill="none" stroke="#22aa33" stroke-width="1.6"/><path d="M2,25L6,20H23L19,25Z" fill="#a9c9b0"/><g fill="#555" stroke="#222" stroke-width="0.6"><rect x="4.3" y="1.3" width="3.4" height="3.4"/><rect x="21.3" y="1.3" width="3.4" height="3.4"/><rect x="0.3" y="4.3" width="3.4" height="3.4"/><rect x="4.3" y="18.3" width="3.4" height="3.4"/><rect x="21.3" y="18.3" width="3.4" height="3.4"/><rect x="0.3" y="23.3" width="3.4" height="3.4"/><rect x="17.3" y="23.3" width="3.4" height="3.4"/></g></svg>
<svg style="position:absolute;left:1837px;top:77px;" width="10" height="6" viewBox="0 0 10 6"><path d="M0.5,0.5H9.5L5,5.5Z" fill="#000"/></svg>
<svg style="position:absolute;left:1852px;top:74px;" width="8" height="12" viewBox="0 0 8 12"><path d="M1.2,1L6.5,6L1.2,11" fill="none" stroke="#222" stroke-width="1.5"/></svg>
<svg style="position:absolute;left:215.4px;top:888px;" width="4" height="48" viewBox="0 0 4 48"><g fill="#8c8c8c"><rect x="0" y="0" width="1.2" height="1.2"/><rect x="2.5" y="0" width="1.2" height="1.2"/><rect x="0" y="3" width="1.2" height="1.2"/><rect x="2.5" y="3" width="1.2" height="1.2"/><rect x="0" y="6" width="1.2" height="1.2"/><rect x="2.5" y="6" width="1.2" height="1.2"/><rect x="0" y="9" width="1.2" height="1.2"/><rect x="2.5" y="9" width="1.2" height="1.2"/><rect x="0" y="12" width="1.2" height="1.2"/><rect x="2.5" y="12" width="1.2" height="1.2"/><rect x="0" y="15" width="1.2" height="1.2"/><rect x="2.5" y="15" width="1.2" height="1.2"/><rect x="0" y="18" width="1.2" height="1.2"/><rect x="2.5" y="18" width="1.2" height="1.2"/><rect x="0" y="21" width="1.2" height="1.2"/><rect x="2.5" y="21" width="1.2" height="1.2"/><rect x="0" y="24" width="1.2" height="1.2"/><rect x="2.5" y="24" width="1.2" height="1.2"/><rect x="0" y="27" width="1.2" height="1.2"/><rect x="2.5" y="27" width="1.2" height="1.2"/><rect x="0" y="30" width="1.2" height="1.2"/><rect x="2.5" y="30" width="1.2" height="1.2"/><rect x="0" y="33" width="1.2" height="1.2"/><rect x="2.5" y="33" width="1.2" height="1.2"/><rect x="0" y="36" width="1.2" height="1.2"/><rect x="2.5" y="36" width="1.2" height="1.2"/><rect x="0" y="39" width="1.2" height="1.2"/><rect x="2.5" y="39" width="1.2" height="1.2"/><rect x="0" y="42" width="1.2" height="1.2"/><rect x="2.5" y="42" width="1.2" height="1.2"/><rect x="0" y="45" width="1.2" height="1.2"/><rect x="2.5" y="45" width="1.2" height="1.2"/></g></svg>
<svg style="position:absolute;left:225px;top:898px;" width="34" height="30" viewBox="0 0 34 30"><rect x="1.5" y="1.5" width="26" height="17" fill="none" stroke="#30353b" stroke-width="1.5" stroke-dasharray="2.2,3"/></svg>
<svg style="position:absolute;left:244px;top:909px;" width="14" height="16" viewBox="0 0 14 16"><path d="M1,1L12,7.5L7.5,8.5L10,14L7,15L5,9.5L1,12.5Z" fill="#30353b"/></svg>
<svg style="position:absolute;left:251px;top:921px;" width="6" height="6" viewBox="0 0 6 6"><path d="M6,0V6H0Z" fill="#000"/></svg>
<div class="s" style="left:264px;top:895px;font-size:15px;font-weight:bold;color:#7b7b7b;letter-spacing:0.5px;line-height:16px">ENT</div>
<svg style="position:absolute;left:282px;top:910px;" width="14" height="16" viewBox="0 0 14 16"><path d="M1,1L12,7.5L7.5,8.5L10,14L7,15L5,9.5L1,12.5Z" fill="#888"/></svg>
<div class="s" style="left:300px;top:894px;font-size:15px;font-weight:bold;color:#7b7b7b;letter-spacing:0.5px;line-height:16px">PID</div>
<svg style="position:absolute;left:318px;top:909px;" width="14" height="16" viewBox="0 0 14 16"><path d="M1,1L12,7.5L7.5,8.5L10,14L7,15L5,9.5L1,12.5Z" fill="#888"/></svg>
<svg style="position:absolute;left:336px;top:908px;" width="10" height="6" viewBox="0 0 10 6"><path d="M0.5,0.5H9.5L5,5.5Z" fill="#6f6f6f"/></svg>
<svg style="position:absolute;left:351px;top:900px;" width="32" height="20" viewBox="0 0 32 20"><path d="M10,16L24,2" stroke="#555" stroke-width="1.8"/><path d="M1,16H30" stroke="#999" stroke-width="2.2"/><path d="M1,16H10" stroke="#555" stroke-width="2.2"/><path d="M19,7A10,10 0 0 1 24,16H12Z" fill="#e4e4e4" stroke="#999" stroke-width="1"/></svg>
<div style="left:385px;top:898px;width:52px;height:24px;background:#f3f3f3;border:1px solid #e9e9e9;"></div>
<div class="t" style="left:389px;top:902px;color:#777;font-size:16px;letter-spacing:-0.6px">40</div>
<div style="left:422px;top:901px;width:14px;height:19px;background:#f1f1f1;border:1px solid #d8d8d8;"></div>
<svg style="position:absolute;left:422px;top:901px;" width="14" height="19" viewBox="0 0 14 19"><path d="M3,7.5L7,3.5L11,7.5Z M3,11.5H11L7,15.5Z" fill="#666"/><path d="M1,9.5H13" stroke="#ddd"/></svg>
<svg style="position:absolute;left:443px;top:897px;" width="26" height="26" viewBox="0 0 26 26"><rect x="1" y="1" width="24" height="24" rx="2" fill="#f4f4f4" stroke="#e0e0e0"/><rect x="4" y="4" width="18" height="18" fill="none" stroke="#b0b0b0" stroke-width="1.5"/><rect x="7.5" y="7.5" width="11" height="11" fill="none" stroke="#d0d0d0" stroke-width="1"/><g fill="#999"><rect x="2.5" y="2.5" width="3" height="3"/><rect x="20.5" y="2.5" width="3" height="3"/><rect x="2.5" y="20.5" width="3" height="3"/><rect x="20.5" y="20.5" width="3" height="3"/></g></svg>
<svg style="position:absolute;left:478px;top:908px;" width="10" height="6" viewBox="0 0 10 6"><path d="M0.5,0.5H9.5L5,5.5Z" fill="#6f6f6f"/></svg>
<svg style="position:absolute;left:494px;top:897px;" width="32" height="28" viewBox="0 0 32 28"><path d="M1,7V23H15" fill="none" stroke="#b5b5b5" stroke-width="2.8"/><rect x="7" y="2" width="19" height="13" fill="#dde7f7" stroke="#3a7af0" stroke-width="1.5" stroke-dasharray="2.5,2"/></svg>
<svg style="position:absolute;left:513px;top:909px;" width="14" height="16" viewBox="0 0 14 16"><path d="M1,1L12,7.5L7.5,8.5L10,14L7,15L5,9.5L1,12.5Z" fill="#30353b"/></svg>
<svg style="position:absolute;left:532px;top:896px;" width="30" height="28" viewBox="0 0 30 28"><path d="M8,1L2,13L8,24L16,20M17,6L24,8V16" fill="none" stroke="#30353b" stroke-width="1.3" stroke-dasharray="2.5,2"/><path d="M8,1L17,6" stroke="#30353b" stroke-width="1.3" stroke-dasharray="2.5,2"/></svg>
<svg style="position:absolute;left:550px;top:909px;" width="14" height="16" viewBox="0 0 14 16"><path d="M1,1L12,7.5L7.5,8.5L10,14L7,15L5,9.5L1,12.5Z" fill="#30353b"/></svg>
<div style="left:564px;top:892px;width:37px;height:36px;background:#c3dcf2;border:1px solid #9fcaf3;border-radius:3px;"></div>
<div style="left:600px;top:892px;width:16px;height:36px;background:#c3dcf2;border:1px solid #9fcaf3;border-radius:3px;"></div>
<svg style="position:absolute;left:568px;top:896px;" width="30" height="28" viewBox="0 0 30 28"><path d="M22,2L27,8L24,11L18,6Z" fill="#f2e12a"/><path d="M17,7L23,13L18,18L16,16L8,24C7,25 5.5,25 4.5,24L3,22.5C2,21.5 2,20 3,19L11,11L9,9Z" fill="#c8dcf5" stroke="#222" stroke-width="1.2"/><path d="M9,20L13,16" stroke="#222" stroke-width="1"/></svg>
<svg style="position:absolute;left:603px;top:908px;" width="10" height="6" viewBox="0 0 10 6"><path d="M0.5,0.5H9.5L5,5.5Z" fill="#000"/></svg>
<svg style="position:absolute;left:621px;top:896px;" width="26" height="30" viewBox="0 0 26 30"><path d="M2,2L22,17L13,17.5L16,25L12,27L9,19.5L2,25Z" fill="#ececec" stroke="#8a8a8a" stroke-width="1.3" stroke-linejoin="round"/></svg>
<svg style="position:absolute;left:660.4px;top:888px;" width="4" height="48" viewBox="0 0 4 48"><g fill="#8c8c8c"><rect x="0" y="0" width="1.2" height="1.2"/><rect x="2.5" y="0" width="1.2" height="1.2"/><rect x="0" y="3" width="1.2" height="1.2"/><rect x="2.5" y="3" width="1.2" height="1.2"/><rect x="0" y="6" width="1.2" height="1.2"/><rect x="2.5" y="6" width="1.2" height="1.2"/><rect x="0" y="9" width="1.2" height="1.2"/><rect x="2.5" y="9" width="1.2" height="1.2"/><rect x="0" y="12" width="1.2" height="1.2"/><rect x="2.5" y="12" width="1.2" height="1.2"/><rect x="0" y="15" width="1.2" height="1.2"/><rect x="2.5" y="15" width="1.2" height="1.2"/><rect x="0" y="18" width="1.2" height="1.2"/><rect x="2.5" y="18" width="1.2" height="1.2"/><rect x="0" y="21" width="1.2" height="1.2"/><rect x="2.5" y="21" width="1.2" height="1.2"/><rect x="0" y="24" width="1.2" height="1.2"/><rect x="2.5" y="24" width="1.2" height="1.2"/><rect x="0" y="27" width="1.2" height="1.2"/><rect x="2.5" y="27" width="1.2" height="1.2"/><rect x="0" y="30" width="1.2" height="1.2"/><rect x="2.5" y="30" width="1.2" height="1.2"/><rect x="0" y="33" width="1.2" height="1.2"/><rect x="2.5" y="33" width="1.2" height="1.2"/><rect x="0" y="36" width="1.2" height="1.2"/><rect x="2.5" y="36" width="1.2" height="1.2"/><rect x="0" y="39" width="1.2" height="1.2"/><rect x="2.5" y="39" width="1.2" height="1.2"/><rect x="0" y="42" width="1.2" height="1.2"/><rect x="2.5" y="42" width="1.2" height="1.2"/><rect x="0" y="45" width="1.2" height="1.2"/><rect x="2.5" y="45" width="1.2" height="1.2"/></g></svg>
<svg style="position:absolute;left:671px;top:897px;" width="28" height="28" viewBox="0 0 28 28"><circle cx="14" cy="14" r="13.5" fill="#d4d4d4"/><path d="M8,19.5L20,8.5" stroke="#222" stroke-width="2.4"/></svg>
<svg style="position:absolute;left:708px;top:897px;" width="28" height="28" viewBox="0 0 28 28"><circle cx="14" cy="14" r="13.5" fill="#d4d4d4"/><path d="M5,14H23M14,5V23" stroke="#222" stroke-width="2.4"/></svg>
<svg style="position:absolute;left:745px;top:897px;" width="28" height="28" viewBox="0 0 28 28"><circle cx="14" cy="14" r="13.5" fill="#d4d4d4"/><path d="M5,14H23" stroke="#222" stroke-width="2.4"/></svg>
<svg style="position:absolute;left:782px;top:897px;" width="28" height="28" viewBox="0 0 28 28"><circle cx="14" cy="14" r="13.5" fill="#d4d4d4"/><path d="M7.5,5.5V17.5M7.5,21V24" stroke="#222" stroke-width="2.4"/><path d="M11,14H24" stroke="#222" stroke-width="2.4"/></svg>
<svg style="position:absolute;left:819px;top:897px;" width="28" height="28" viewBox="0 0 28 28"><g fill="#b4b4b4" stroke="#3a3e44" stroke-width="1.6"><rect x="1.5" y="1.5" width="11" height="11" rx="2"/><rect x="15.5" y="1.5" width="11" height="11" rx="2"/><rect x="1.5" y="15.5" width="11" height="11" rx="2"/><rect x="15.5" y="15.5" width="11" height="11" rx="2"/></g></svg>
<svg style="position:absolute;left:856px;top:897px;" width="28" height="28" viewBox="0 0 28 28"><rect x="1.5" y="1.5" width="11" height="11" rx="2" fill="#b4b4b4" stroke="#3a3e44" stroke-width="1.6"/><path d="M15.5,1.5H24.5C25.6,1.5 26.5,2.4 26.5,3.5V12.5H15.5Z" fill="#f4f4f4" stroke="#c8c8c8" stroke-width="1.4"/><path d="M15.5,12.5V3.5C15.5,2.4 16.4,1.5 17.5,1.5H26Z" fill="#b4b4b4" stroke="#555" stroke-width="1"/><path d="M1.5,15.5H12.5V24.5C12.5,25.6 11.6,26.5 10.5,26.5H1.5Z" fill="#f4f4f4" stroke="#c8c8c8" stroke-width="1.4"/><path d="M1.5,26.5V17.5C1.5,16.4 2.4,15.5 3.5,15.5H12.5Z" fill="#b4b4b4" stroke="#555" stroke-width="1"/><rect x="15.5" y="15.5" width="11" height="11" rx="2" fill="#f4f4f4" stroke="#c8c8c8" stroke-width="1.4"/></svg>
<svg style="position:absolute;left:895px;top:896px;" width="25" height="30" viewBox="0 0 25 30"><path d="M6,12V8C6,4 8.5,1.5 12.5,1.5C16.5,1.5 19,4 19,8V12" fill="none" stroke="#222" stroke-width="2.2"/><rect x="1.5" y="12" width="22" height="15.5" rx="2" fill="#b0b0b0" stroke="#2a2d30" stroke-width="1.6"/><circle cx="12.5" cy="18" r="2" fill="none" stroke="#222" stroke-width="1.2"/><path d="M12.5,20V23" stroke="#222" stroke-width="1.3"/></svg>
<svg style="position:absolute;left:929px;top:909px;" width="10" height="6" viewBox="0 0 10 6"><path d="M0.5,0.5H9.5L5,5.5Z" fill="#000"/></svg>
<svg style="position:absolute;left:944px;top:896px;" width="32" height="32" viewBox="0 0 32 32"><g fill="#b0b0b0" stroke="#2a2d30" stroke-width="1.4"><rect x="10.5" y="1.5" width="7" height="7" rx="1.5"/><rect x="1.5" y="10.5" width="7" height="7" rx="1.5"/><rect x="19.5" y="10.5" width="7" height="7" rx="1.5"/><rect x="10.5" y="19.5" width="7" height="7" rx="1.5"/></g><rect x="10" y="10" width="8" height="8" rx="1.5" fill="#b0b0b0" stroke="#1a1d20" stroke-width="2"/><path d="M31,25V30H26Z" fill="#000"/></svg>
<svg style="position:absolute;left:981px;top:896px;" width="30" height="30" viewBox="0 0 30 30"><circle cx="15" cy="15" r="13.5" fill="#eef0f4" stroke="#9aa6b6" stroke-width="0.8"/><circle cx="15" cy="15" r="9.5" fill="#d6dce6" stroke="#444" stroke-width="0.9"/><rect x="10.5" y="10.5" width="9" height="9" rx="2" fill="#999" stroke="#111" stroke-width="2"/></svg>
<svg style="position:absolute;left:1019px;top:904px;" width="8" height="12" viewBox="0 0 8 12"><path d="M1.2,1L6.5,6L1.2,11" fill="none" stroke="#222" stroke-width="1.5"/></svg>
<svg style="position:absolute;left:1105.4px;top:888px;" width="4" height="48" viewBox="0 0 4 48"><g fill="#8c8c8c"><rect x="0" y="0" width="1.2" height="1.2"/><rect x="2.5" y="0" width="1.2" height="1.2"/><rect x="0" y="3" width="1.2" height="1.2"/><rect x="2.5" y="3" width="1.2" height="1.2"/><rect x="0" y="6" width="1.2" height="1.2"/><rect x="2.5" y="6" width="1.2" height="1.2"/><rect x="0" y="9" width="1.2" height="1.2"/><rect x="2.5" y="9" width="1.2" height="1.2"/><rect x="0" y="12" width="1.2" height="1.2"/><rect x="2.5" y="12" width="1.2" height="1.2"/><rect x="0" y="15" width="1.2" height="1.2"/><rect x="2.5" y="15" width="1.2" height="1.2"/><rect x="0" y="18" width="1.2" height="1.2"/><rect x="2.5" y="18" width="1.2" height="1.2"/><rect x="0" y="21" width="1.2" height="1.2"/><rect x="2.5" y="21" width="1.2" height="1.2"/><rect x="0" y="24" width="1.2" height="1.2"/><rect x="2.5" y="24" width="1.2" height="1.2"/><rect x="0" y="27" width="1.2" height="1.2"/><rect x="2.5" y="27" width="1.2" height="1.2"/><rect x="0" y="30" width="1.2" height="1.2"/><rect x="2.5" y="30" width="1.2" height="1.2"/><rect x="0" y="33" width="1.2" height="1.2"/><rect x="2.5" y="33" width="1.2" height="1.2"/><rect x="0" y="36" width="1.2" height="1.2"/><rect x="2.5" y="36" width="1.2" height="1.2"/><rect x="0" y="39" width="1.2" height="1.2"/><rect x="2.5" y="39" width="1.2" height="1.2"/><rect x="0" y="42" width="1.2" height="1.2"/><rect x="2.5" y="42" width="1.2" height="1.2"/><rect x="0" y="45" width="1.2" height="1.2"/><rect x="2.5" y="45" width="1.2" height="1.2"/></g></svg>
<svg style="position:absolute;left:1116px;top:895px;" width="32" height="32" viewBox="0 0 32 32"><rect x="8" y="1.5" width="11" height="11" rx="2.5" fill="#ece3b0" stroke="#e0b820" stroke-width="1.4"/><text x="1" y="27" font-family="Liberation Sans" font-weight="bold" font-size="15" fill="#2a2d30" letter-spacing="-0.5">ENT</text><path d="M30,24V29H25Z" fill="#000"/></svg>
<svg style="position:absolute;left:1153px;top:896px;" width="28" height="28" viewBox="0 0 28 28"><path d="M1.5,4C1.5,2.5 2.5,1.5 4,1.5H22C23.5,1.5 24.5,2.5 24.5,4V5L6,24.5H4C2.5,24.5 1.5,23.5 1.5,22Z" fill="#f4ec9a" stroke="#3a3e44" stroke-width="1.5"/><path d="M9,2V17M9,14H14" stroke="#c9b020" stroke-width="1.4"/><path d="M10,24.5H22C23.5,24.5 24.5,23.5 24.5,22V11Z" fill="#dde6f6" stroke="#2f3a57" stroke-width="1.5"/><path d="M19,16V24M19,16L21,15" stroke="#3c78e8" stroke-width="1.4"/></svg>
<div style="left:1186px;top:892px;width:37px;height:35px;background:#d0e8fc;border:1px solid #a6d2f8;border-radius:3px;"></div>
<svg style="position:absolute;left:1190px;top:895px;" width="30" height="32" viewBox="0 0 30 32"><path d="M2,7.5L15,1.5L28,7.5V23L15,29.5L2,23Z" fill="#8fb4f5" stroke="#2a2d30" stroke-width="1.5" stroke-linejoin="round"/><path d="M2,7.5L15,13.5L28,7.5L15,1.5Z" fill="#c0d8fa" stroke="#2a2d30" stroke-width="1.5" stroke-linejoin="round"/><path d="M2,7.5L15,13.5V29.5L2,23Z" fill="#7ea2e6" stroke="#2a2d30" stroke-width="1.5" stroke-linejoin="round"/></svg>
<svg style="position:absolute;left:1227px;top:896px;" width="28" height="28" viewBox="0 0 28 28"><rect x="1.5" y="1.5" width="24" height="24" rx="2.5" fill="#e4e6ea" stroke="#3a3e44" stroke-width="1.6"/><rect x="2.3" y="2.3" width="11" height="6.5" fill="#9fbaf2"/><rect x="14" y="9" width="11" height="8" fill="#9fbaf2"/><rect x="2.3" y="17.5" width="6.5" height="7.5" fill="#9fbaf2"/><path d="M2,9H25M2,17.5H25M13.5,2V9L10,17.5V25M13.5,9L17,17.5V25" fill="none" stroke="#2a2d30" stroke-width="1.3"/></svg>
<svg style="position:absolute;left:1262px;top:895px;" width="32" height="32" viewBox="0 0 32 32"><defs><linearGradient id="rb1" x1="0" y1="0" x2="1" y2="1"><stop offset="0" stop-color="#2a70ff"/><stop offset="0.35" stop-color="#30d060"/><stop offset="0.55" stop-color="#f0e020"/><stop offset="0.8" stop-color="#e02020"/><stop offset="1" stop-color="#2a70ff"/></linearGradient><linearGradient id="rb2" x1="1" y1="0" x2="0" y2="1"><stop offset="0" stop-color="#2a70ff"/><stop offset="0.45" stop-color="#40d060"/><stop offset="0.7" stop-color="#f0d020"/><stop offset="1" stop-color="#e03020"/></linearGradient></defs><path d="M1.5,7.5L14.5,1.5L29,7.5V23L14.5,29.5L1.5,23Z" fill="url(#rb1)" stroke="#2a2d30" stroke-width="1.5" stroke-linejoin="round"/><path d="M1.5,7.5L14.5,13.5L29,7.5M14.5,13.5V29.5" fill="none" stroke="#2a2d30" stroke-width="1.5"/><path d="M15.3,14.2L28.3,8.3V22.5L15.3,28.5Z" fill="url(#rb2)"/></svg>
<svg style="position:absolute;left:1300px;top:908px;" width="10" height="6" viewBox="0 0 10 6"><path d="M0.5,0.5H9.5L5,5.5Z" fill="#000"/></svg>
<div style="left:1312px;top:892px;width:37px;height:35px;background:#d0e8fc;border:1px solid #a6d2f8;border-radius:3px;"></div>
<svg style="position:absolute;left:1316px;top:895px;" width="30" height="32" viewBox="0 0 30 32"><path d="M2,7.5L15,1.5L28,7.5V23L15,29.5L2,23Z" fill="#d4e8fb" stroke="#2a2d30" stroke-width="1.4" stroke-linejoin="round"/><path d="M2,7.5L15,13.5L28,7.5M15,13.5V29.5M8.5,4.5L21.5,10.5M21.5,4.5L8.5,10.5V26.5M21.5,10.5V26.5M2,15.3L15,21.5L28,15.3" fill="none" stroke="#2a2d30" stroke-width="1.2"/></svg>
<svg style="position:absolute;left:1352px;top:895px;" width="30" height="32" viewBox="0 0 30 32"><path d="M2,7.5L15,1.5L28,7.5V23L15,29.5L2,23Z M2,7.5L15,13.5L28,7.5 M15,13.5V29.5 M15,1.5V17.5 M2,23L15,17.5L28,23" fill="none" stroke="#e25a48" stroke-width="1.2" stroke-linejoin="round"/></svg>
<svg style="position:absolute;left:1389px;top:908px;" width="10" height="6" viewBox="0 0 10 6"><path d="M0.5,0.5H9.5L5,5.5Z" fill="#000"/></svg>
<svg style="position:absolute;left:1403px;top:895px;" width="32" height="32" viewBox="0 0 32 32"><path d="M2,15V23L15,29.5V14Z" fill="#c4c6ca" stroke="#2a2d30" stroke-width="1.4"/><path d="M15,14L28,7.5V23L15,29.5Z" fill="#d6d8dc" stroke="#2a2d30" stroke-width="1.4"/><path d="M15,2L28,7.5L15,14Z" fill="#e8eaee"/><path d="M15,2L28,7.5" stroke="#2a2d30" stroke-width="1.4"/><path d="M5,1V13M13,1V12" stroke="#3a78f0" stroke-width="1.3"/><rect x="2" y="7" width="6" height="4" rx="1" fill="#dde8ff" stroke="#3a78f0" stroke-width="1.3"/><rect x="10" y="3" width="6" height="4" rx="1" fill="#dde8ff" stroke="#3a78f0" stroke-width="1.3"/></svg>
<svg style="position:absolute;left:1441px;top:908px;" width="10" height="6" viewBox="0 0 10 6"><path d="M0.5,0.5H9.5L5,5.5Z" fill="#000"/></svg>
<svg style="position:absolute;left:1456px;top:905px;" width="8" height="12" viewBox="0 0 8 12"><path d="M1.2,1L6.5,6L1.2,11" fill="none" stroke="#222" stroke-width="1.5"/></svg>
<svg style="position:absolute;left:215.4px;top:947px;" width="4" height="48" viewBox="0 0 4 48"><g fill="#8c8c8c"><rect x="0" y="0" width="1.2" height="1.2"/><rect x="2.5" y="0" width="1.2" height="1.2"/><rect x="0" y="3" width="1.2" height="1.2"/><rect x="2.5" y="3" width="1.2" height="1.2"/><rect x="0" y="6" width="1.2" height="1.2"/><rect x="2.5" y="6" width="1.2" height="1.2"/><rect x="0" y="9" width="1.2" height="1.2"/><rect x="2.5" y="9" width="1.2" height="1.2"/><rect x="0" y="12" width="1.2" height="1.2"/><rect x="2.5" y="12" width="1.2" height="1.2"/><rect x="0" y="15" width="1.2" height="1.2"/><rect x="2.5" y="15" width="1.2" height="1.2"/><rect x="0" y="18" width="1.2" height="1.2"/><rect x="2.5" y="18" width="1.2" height="1.2"/><rect x="0" y="21" width="1.2" height="1.2"/><rect x="2.5" y="21" width="1.2" height="1.2"/><rect x="0" y="24" width="1.2" height="1.2"/><rect x="2.5" y="24" width="1.2" height="1.2"/><rect x="0" y="27" width="1.2" height="1.2"/><rect x="2.5" y="27" width="1.2" height="1.2"/><rect x="0" y="30" width="1.2" height="1.2"/><rect x="2.5" y="30" width="1.2" height="1.2"/><rect x="0" y="33" width="1.2" height="1.2"/><rect x="2.5" y="33" width="1.2" height="1.2"/><rect x="0" y="36" width="1.2" height="1.2"/><rect x="2.5" y="36" width="1.2" height="1.2"/><rect x="0" y="39" width="1.2" height="1.2"/><rect x="2.5" y="39" width="1.2" height="1.2"/><rect x="0" y="42" width="1.2" height="1.2"/><rect x="2.5" y="42" width="1.2" height="1.2"/><rect x="0" y="45" width="1.2" height="1.2"/><rect x="2.5" y="45" width="1.2" height="1.2"/></g></svg>
<div style="left:222px;top:952px;width:37px;height:35px;background:#d0e8fc;border:1px solid #a6d2f8;border-radius:3px;"></div>
<div style="left:259px;top:952px;width:37px;height:35px;background:#d0e8fc;border:1px solid #a6d2f8;border-radius:3px;"></div>
<svg style="position:absolute;left:226px;top:955px;" width="30" height="32" viewBox="0 0 30 32"><path d="M9,4L15,1L26,6.5V22L15,28" fill="none" stroke="#2a2d30" stroke-width="1.3"/><path d="M15,28L10,25M26,6.5L15,12.5M9,8.5L15,12.5V27" fill="none" stroke="#2a2d30" stroke-width="1.3" stroke-dasharray="2.5,2"/><path d="M4,9V22" stroke="#2a2d30" stroke-width="1.2" stroke-dasharray="2,2"/><g fill="#3a78f0"><circle cx="4.3" cy="8.5" r="2"/><circle cx="15.5" cy="13" r="2"/><circle cx="4.3" cy="22" r="2"/><circle cx="15.5" cy="27.5" r="2"/></g></svg>
<svg style="position:absolute;left:263px;top:955px;" width="30" height="32" viewBox="0 0 30 32"><path d="M5,6.5L16,1L27,6.5V22L16,28" fill="none" stroke="#2a2d30" stroke-width="1.3"/><path d="M16,12.5L27,6.5" stroke="#2a2d30" stroke-width="1.3"/><path d="M4,9L16,15V28L4,22Z" fill="none" stroke="#3a78f0" stroke-width="1.5"/></svg>
<svg style="position:absolute;left:300px;top:964px;" width="8" height="12" viewBox="0 0 8 12"><path d="M1.2,1L6.5,6L1.2,11" fill="none" stroke="#222" stroke-width="1.5"/></svg>
<svg style="position:absolute;left:348.4px;top:947px;" width="4" height="48" viewBox="0 0 4 48"><g fill="#8c8c8c"><rect x="0" y="0" width="1.2" height="1.2"/><rect x="2.5" y="0" width="1.2" height="1.2"/><rect x="0" y="3" width="1.2" height="1.2"/><rect x="2.5" y="3" width="1.2" height="1.2"/><rect x="0" y="6" width="1.2" height="1.2"/><rect x="2.5" y="6" width="1.2" height="1.2"/><rect x="0" y="9" width="1.2" height="1.2"/><rect x="2.5" y="9" width="1.2" height="1.2"/><rect x="0" y="12" width="1.2" height="1.2"/><rect x="2.5" y="12" width="1.2" height="1.2"/><rect x="0" y="15" width="1.2" height="1.2"/><rect x="2.5" y="15" width="1.2" height="1.2"/><rect x="0" y="18" width="1.2" height="1.2"/><rect x="2.5" y="18" width="1.2" height="1.2"/><rect x="0" y="21" width="1.2" height="1.2"/><rect x="2.5" y="21" width="1.2" height="1.2"/><rect x="0" y="24" width="1.2" height="1.2"/><rect x="2.5" y="24" width="1.2" height="1.2"/><rect x="0" y="27" width="1.2" height="1.2"/><rect x="2.5" y="27" width="1.2" height="1.2"/><rect x="0" y="30" width="1.2" height="1.2"/><rect x="2.5" y="30" width="1.2" height="1.2"/><rect x="0" y="33" width="1.2" height="1.2"/><rect x="2.5" y="33" width="1.2" height="1.2"/><rect x="0" y="36" width="1.2" height="1.2"/><rect x="2.5" y="36" width="1.2" height="1.2"/><rect x="0" y="39" width="1.2" height="1.2"/><rect x="2.5" y="39" width="1.2" height="1.2"/><rect x="0" y="42" width="1.2" height="1.2"/><rect x="2.5" y="42" width="1.2" height="1.2"/><rect x="0" y="45" width="1.2" height="1.2"/><rect x="2.5" y="45" width="1.2" height="1.2"/></g></svg>
<div style="left:355px;top:952px;width:37px;height:35px;background:#d0e8fc;border:1px solid #a6d2f8;border-radius:3px;"></div>
<div style="left:392px;top:952px;width:37px;height:35px;background:#d0e8fc;border:1px solid #a6d2f8;border-radius:3px;"></div>
<div style="left:429px;top:952px;width:37px;height:35px;background:#d0e8fc;border:1px solid #a6d2f8;border-radius:3px;"></div>
<svg style="position:absolute;left:358px;top:955px;" width="32" height="32" viewBox="0 0 32 32"><path d="M2,8L16,2L30,8V22L16,28L2,22Z" fill="#dcd6ea" stroke="#2a2d30" stroke-width="1.4" stroke-linejoin="round"/><path d="M2,8L16,14L30,8M16,14V28" fill="none" stroke="#e0507a" stroke-width="1.3"/><path d="M16,2V16M2,22L16,16L30,22" fill="none" stroke="#ec8fb0" stroke-width="1"/></svg>
<svg style="position:absolute;left:396px;top:956px;" width="30" height="30" viewBox="0 0 30 30"><rect x="1.5" y="1.5" width="25" height="25" rx="2.5" fill="#dcd6ea" stroke="#3a3e44" stroke-width="1.5"/><path d="M2,8H26M2,19H26M14,2V8L10.5,19V26M14,8L17.5,19V26" fill="none" stroke="#e04870" stroke-width="1.2"/></svg>
<svg style="position:absolute;left:432px;top:955px;" width="32" height="32" viewBox="0 0 32 32"><path d="M3,8L6,5V22L3,25Z" fill="#f3c0d6" stroke="#e04870" stroke-width="1.2"/><path d="M3,25L6,22H25L22,25Z" fill="#f3c0d6" stroke="#e04870" stroke-width="1.2"/><rect x="6" y="2.5" width="21" height="19.5" rx="2.5" fill="#dcd6ea" stroke="#3a3e44" stroke-width="1.5"/><path d="M6.5,8.5H26.5M6.5,16H26.5M16.5,3V8.5L13,16V22M16.5,8.5L20,16V22M11,16V22M22,16V22" fill="none" stroke="#3a3e44" stroke-width="1.1"/></svg>
<svg style="position:absolute;left:470px;top:957px;" width="28" height="28" viewBox="0 0 28 28"><circle cx="14" cy="13" r="12" fill="#f3e4ea"/><path d="M1,11.5H10.5M5.8,7V16" stroke="#e0507a" stroke-width="2.2"/><path d="M13,6H22.5M17.8,1V11M11,20H20M15.5,15V25" stroke="#3a3e44" stroke-width="1.4"/></svg>
<svg style="position:absolute;left:506px;top:968px;" width="10" height="6" viewBox="0 0 10 6"><path d="M0.5,0.5H9.5L5,5.5Z" fill="#000"/></svg>
<svg style="position:absolute;left:524px;top:955px;" width="24" height="30" viewBox="0 0 24 30"><path d="M3,2H21C22.5,2 23,3 23,4.5C23,6 22,7 20.5,7C17,7 15,8 15,11V19C15,22 17,23 20.5,23C22,23 23,24 23,25.5C23,27 22.5,28 21,28H3C1.5,28 1,27 1,25.5C1,24 2,23 3.5,23C7,23 9,22 9,19V11C9,8 7,7 3.5,7C2,7 1,6 1,4.5C1,3 1.5,2 3,2Z" fill="#f3dde3" stroke="#3a3e44" stroke-width="1.4"/></svg>
<div style="left:555px;top:952px;width:37px;height:35px;background:#c3dcf2;border:1px solid #9fcaf3;border-radius:3px;"></div>
<div style="left:591px;top:952px;width:16px;height:35px;background:#c3dcf2;border:1px solid #9fcaf3;border-radius:3px;"></div>
<svg style="position:absolute;left:559px;top:956px;" width="28" height="28" viewBox="0 0 28 28"><path d="M1.5,13.5L8,2H20L26.5,13.5L20,25H8Z" fill="#dcd6ea" stroke="#474c52" stroke-width="1.3"/><circle cx="14" cy="13.5" r="5" fill="none" stroke="#e0407a" stroke-width="1.8"/></svg>
<svg style="position:absolute;left:594px;top:968px;" width="10" height="6" viewBox="0 0 10 6"><path d="M0.5,0.5H9.5L5,5.5Z" fill="#000"/></svg>
<svg style="position:absolute;left:612px;top:964px;" width="8" height="12" viewBox="0 0 8 12"><path d="M1.2,1L6.5,6L1.2,11" fill="none" stroke="#222" stroke-width="1.5"/></svg>
<svg style="position:absolute;left:660.4px;top:947px;" width="4" height="48" viewBox="0 0 4 48"><g fill="#8c8c8c"><rect x="0" y="0" width="1.2" height="1.2"/><rect x="2.5" y="0" width="1.2" height="1.2"/><rect x="0" y="3" width="1.2" height="1.2"/><rect x="2.5" y="3" width="1.2" height="1.2"/><rect x="0" y="6" width="1.2" height="1.2"/><rect x="2.5" y="6" width="1.2" height="1.2"/><rect x="0" y="9" width="1.2" height="1.2"/><rect x="2.5" y="9" width="1.2" height="1.2"/><rect x="0" y="12" width="1.2" height="1.2"/><rect x="2.5" y="12" width="1.2" height="1.2"/><rect x="0" y="15" width="1.2" height="1.2"/><rect x="2.5" y="15" width="1.2" height="1.2"/><rect x="0" y="18" width="1.2" height="1.2"/><rect x="2.5" y="18" width="1.2" height="1.2"/><rect x="0" y="21" width="1.2" height="1.2"/><rect x="2.5" y="21" width="1.2" height="1.2"/><rect x="0" y="24" width="1.2" height="1.2"/><rect x="2.5" y="24" width="1.2" height="1.2"/><rect x="0" y="27" width="1.2" height="1.2"/><rect x="2.5" y="27" width="1.2" height="1.2"/><rect x="0" y="30" width="1.2" height="1.2"/><rect x="2.5" y="30" width="1.2" height="1.2"/><rect x="0" y="33" width="1.2" height="1.2"/><rect x="2.5" y="33" width="1.2" height="1.2"/><rect x="0" y="36" width="1.2" height="1.2"/><rect x="2.5" y="36" width="1.2" height="1.2"/><rect x="0" y="39" width="1.2" height="1.2"/><rect x="2.5" y="39" width="1.2" height="1.2"/><rect x="0" y="42" width="1.2" height="1.2"/><rect x="2.5" y="42" width="1.2" height="1.2"/><rect x="0" y="45" width="1.2" height="1.2"/><rect x="2.5" y="45" width="1.2" height="1.2"/></g></svg>
<div style="left:667px;top:951px;width:37px;height:36px;background:#d0e8fc;border:1px solid #a6d2f8;border-radius:3px;"></div>
<svg style="position:absolute;left:670px;top:955px;" width="32" height="30" viewBox="0 0 32 30"><rect x="5" y="5" width="22" height="19" fill="#dfe69c" stroke="#b5a010" stroke-width="1.5"/><g fill="#fff" stroke="#333" stroke-width="1"><circle cx="5" cy="5" r="3"/><circle cx="27" cy="5" r="3"/><circle cx="5" cy="24" r="3"/><circle cx="27" cy="24" r="3"/></g></svg>
<svg style="position:absolute;left:707px;top:954px;" width="30" height="32" viewBox="0 0 30 32"><rect x="2" y="4" width="26" height="21" rx="2" fill="#f5ef9c" stroke="#c0a010" stroke-width="1.6"/><path d="M15,1V31M1,14.5H29" stroke="#12b02a" stroke-width="2" stroke-dasharray="3,3"/><path d="M11,14.5H19M15,10.5V18.5" stroke="#12b02a" stroke-width="2.2"/></svg>
<div style="left:741px;top:951px;width:37px;height:36px;background:#c3dcf2;border:1px solid #9fcaf3;border-radius:3px;"></div>
<div style="left:777px;top:951px;width:16px;height:36px;background:#c3dcf2;border:1px solid #9fcaf3;border-radius:3px;"></div>
<svg style="position:absolute;left:745px;top:954px;" width="30" height="32" viewBox="0 0 30 32"><rect x="3" y="4.5" width="24" height="21" rx="2" fill="#dfe69c" stroke="#c0a010" stroke-width="1.6"/><path d="M15,5V25" stroke="#12b02a" stroke-width="1.8"/><g fill="#fff" stroke="#333" stroke-width="1"><circle cx="15" cy="4.5" r="3"/><circle cx="15" cy="25.5" r="3"/></g></svg>
<svg style="position:absolute;left:780px;top:968px;" width="10" height="6" viewBox="0 0 10 6"><path d="M0.5,0.5H9.5L5,5.5Z" fill="#000"/></svg>
<div style="left:793px;top:951px;width:37px;height:36px;background:#d0e8fc;border:1px solid #a6d2f8;border-radius:3px;"></div>
<div style="left:830px;top:951px;width:37px;height:36px;background:#d0e8fc;border:1px solid #a6d2f8;border-radius:3px;"></div>
<svg style="position:absolute;left:797px;top:954px;" width="30" height="32" viewBox="0 0 30 32"><rect x="4" y="7" width="24" height="18" rx="2" fill="#dfe69c" stroke="#22aa33" stroke-width="1.6"/><path d="M16,9V25" stroke="#12b02a" stroke-width="1.8"/><rect x="1.5" y="2" width="15" height="8.5" rx="4.25" fill="#3a78f0" stroke="#d0e8fc" stroke-width="1.2"/><circle cx="12" cy="6.25" r="2.8" fill="#fff"/></svg>
<svg style="position:absolute;left:834px;top:954px;" width="30" height="32" viewBox="0 0 30 32"><rect x="2" y="7" width="25" height="20" rx="2" fill="#dfe69c" stroke="#d04530" stroke-width="1.6"/></svg>
<div style="left:867px;top:951px;width:37px;height:36px;background:#c3dcf2;border:1px solid #9fcaf3;border-radius:3px;"></div>
<div style="left:903px;top:951px;width:16px;height:36px;background:#c3dcf2;border:1px solid #9fcaf3;border-radius:3px;"></div>
<svg style="position:absolute;left:871px;top:954px;" width="30" height="32" viewBox="0 0 30 32"><rect x="2" y="7" width="25" height="20" rx="2" fill="#dfe69c" stroke="#b5a010" stroke-width="1.6"/><path d="M14.5,7V27" stroke="#b5a010" stroke-width="1.8"/></svg>
<svg style="position:absolute;left:906px;top:968px;" width="10" height="6" viewBox="0 0 10 6"><path d="M0.5,0.5H9.5L5,5.5Z" fill="#000"/></svg>
<div style="left:920px;top:951px;width:37px;height:36px;background:#d0e8fc;border:1px solid #a6d2f8;border-radius:3px;"></div>
<svg style="position:absolute;left:924px;top:954px;" width="30" height="32" viewBox="0 0 30 32"><path d="M2.5,5.5L14.5,9.5L26.5,5.5V26.5L14.5,22.5L2.5,26.5Z" fill="#e2eba0" stroke="#3a78f0" stroke-width="1.4"/><path d="M14.5,9.5V22.5" stroke="#3a78f0" stroke-width="2"/></svg>
<svg style="position:absolute;left:1105.4px;top:947px;" width="4" height="48" viewBox="0 0 4 48"><g fill="#8c8c8c"><rect x="0" y="0" width="1.2" height="1.2"/><rect x="2.5" y="0" width="1.2" height="1.2"/><rect x="0" y="3" width="1.2" height="1.2"/><rect x="2.5" y="3" width="1.2" height="1.2"/><rect x="0" y="6" width="1.2" height="1.2"/><rect x="2.5" y="6" width="1.2" height="1.2"/><rect x="0" y="9" width="1.2" height="1.2"/><rect x="2.5" y="9" width="1.2" height="1.2"/><rect x="0" y="12" width="1.2" height="1.2"/><rect x="2.5" y="12" width="1.2" height="1.2"/><rect x="0" y="15" width="1.2" height="1.2"/><rect x="2.5" y="15" width="1.2" height="1.2"/><rect x="0" y="18" width="1.2" height="1.2"/><rect x="2.5" y="18" width="1.2" height="1.2"/><rect x="0" y="21" width="1.2" height="1.2"/><rect x="2.5" y="21" width="1.2" height="1.2"/><rect x="0" y="24" width="1.2" height="1.2"/><rect x="2.5" y="24" width="1.2" height="1.2"/><rect x="0" y="27" width="1.2" height="1.2"/><rect x="2.5" y="27" width="1.2" height="1.2"/><rect x="0" y="30" width="1.2" height="1.2"/><rect x="2.5" y="30" width="1.2" height="1.2"/><rect x="0" y="33" width="1.2" height="1.2"/><rect x="2.5" y="33" width="1.2" height="1.2"/><rect x="0" y="36" width="1.2" height="1.2"/><rect x="2.5" y="36" width="1.2" height="1.2"/><rect x="0" y="39" width="1.2" height="1.2"/><rect x="2.5" y="39" width="1.2" height="1.2"/><rect x="0" y="42" width="1.2" height="1.2"/><rect x="2.5" y="42" width="1.2" height="1.2"/><rect x="0" y="45" width="1.2" height="1.2"/><rect x="2.5" y="45" width="1.2" height="1.2"/></g></svg>
<div style="left:1112px;top:952px;width:37px;height:35px;background:#d0e8fc;border:1px solid #a6d2f8;border-radius:3px;"></div>
<svg style="position:absolute;left:1116px;top:955px;" width="30" height="30" viewBox="0 0 30 30"><path d="M3,11H26V26H3Z" fill="#b2e2d0"/><path d="M6,26L9,23H25L22,26Z" fill="#9cc4b4"/><path d="M15,2.5H25V24M3.5,11V26M6.5,11V23H25M3.5,26H22L25,23" fill="none" stroke="#22aa33" stroke-width="1.5"/><rect x="1.5" y="2.5" width="13.5" height="8" rx="4" fill="#3a78f0"/><circle cx="11" cy="6.5" r="2.8" fill="#fff"/><g fill="#444" stroke="#222" stroke-width="0.5"><rect x="23.5" y="1.5" width="3" height="3"/><rect x="5" y="21.5" width="3" height="3"/><rect x="23.5" y="21.5" width="3" height="3"/><rect x="2" y="24.5" width="3" height="3"/><rect x="20.5" y="24.5" width="3" height="3"/></g></svg>
<svg style="position:absolute;left:1153px;top:956px;" width="30" height="28" viewBox="0 0 30 28"><defs><linearGradient id="gb" x1="0" y1="1" x2="1" y2="0"><stop offset="0" stop-color="#8cc49a"/><stop offset="0.6" stop-color="#c8f2c8"/></linearGradient></defs><path d="M1.5,7L6,1.5H25.5V19L20.5,25.5H1.5Z" fill="#a8d8b0" stroke="#2a2d30" stroke-width="1.5" stroke-linejoin="round"/><rect x="6" y="1.5" width="19.5" height="17.5" fill="url(#gb)" stroke="#2a2d30" stroke-width="1.5"/><path d="M1.5,7L6,1.5M6,19L1.5,25.5" stroke="#2a2d30" stroke-width="1.5"/></svg>
<svg style="position:absolute;left:1190px;top:956px;" width="30" height="28" viewBox="0 0 30 28"><path d="M1.5,7L6,1.5H25.5V19L20.5,25.5H1.5Z" fill="#cdeccf" stroke="#2a2d30" stroke-width="1.5" stroke-linejoin="round"/><rect x="6" y="1.5" width="19.5" height="17.5" fill="#cdeccf" stroke="#2a2d30" stroke-width="1.5"/><path d="M1.5,7L6,1.5M6,19L1.5,25.5" stroke="#2a2d30" stroke-width="1.5"/><path d="M15.5,2V19M6,10H25.5M4,15L2,18M13,20L11,25" stroke="#12a02a" stroke-width="1.6" stroke-dasharray="2.5,2"/></svg>
<svg style="position:absolute;left:1228px;top:964px;" width="8" height="12" viewBox="0 0 8 12"><path d="M1.2,1L6.5,6L1.2,11" fill="none" stroke="#222" stroke-width="1.5"/></svg>
<svg style="position:absolute;left:1267.4px;top:947px;" width="4" height="48" viewBox="0 0 4 48"><g fill="#8c8c8c"><rect x="0" y="0" width="1.2" height="1.2"/><rect x="2.5" y="0" width="1.2" height="1.2"/><rect x="0" y="3" width="1.2" height="1.2"/><rect x="2.5" y="3" width="1.2" height="1.2"/><rect x="0" y="6" width="1.2" height="1.2"/><rect x="2.5" y="6" width="1.2" height="1.2"/><rect x="0" y="9" width="1.2" height="1.2"/><rect x="2.5" y="9" width="1.2" height="1.2"/><rect x="0" y="12" width="1.2" height="1.2"/><rect x="2.5" y="12" width="1.2" height="1.2"/><rect x="0" y="15" width="1.2" height="1.2"/><rect x="2.5" y="15" width="1.2" height="1.2"/><rect x="0" y="18" width="1.2" height="1.2"/><rect x="2.5" y="18" width="1.2" height="1.2"/><rect x="0" y="21" width="1.2" height="1.2"/><rect x="2.5" y="21" width="1.2" height="1.2"/><rect x="0" y="24" width="1.2" height="1.2"/><rect x="2.5" y="24" width="1.2" height="1.2"/><rect x="0" y="27" width="1.2" height="1.2"/><rect x="2.5" y="27" width="1.2" height="1.2"/><rect x="0" y="30" width="1.2" height="1.2"/><rect x="2.5" y="30" width="1.2" height="1.2"/><rect x="0" y="33" width="1.2" height="1.2"/><rect x="2.5" y="33" width="1.2" height="1.2"/><rect x="0" y="36" width="1.2" height="1.2"/><rect x="2.5" y="36" width="1.2" height="1.2"/><rect x="0" y="39" width="1.2" height="1.2"/><rect x="2.5" y="39" width="1.2" height="1.2"/><rect x="0" y="42" width="1.2" height="1.2"/><rect x="2.5" y="42" width="1.2" height="1.2"/><rect x="0" y="45" width="1.2" height="1.2"/><rect x="2.5" y="45" width="1.2" height="1.2"/></g></svg>
<div style="left:1275px;top:952px;width:36px;height:35px;background:#d0e8fc;border:1px solid #a6d2f8;border-radius:3px;"></div>
<svg style="position:absolute;left:1278px;top:955px;" width="32" height="30" viewBox="0 0 32 30"><rect x="1.5" y="2.5" width="13.5" height="8" rx="4" fill="#3a78f0"/><circle cx="11" cy="6.5" r="2.8" fill="#fff"/><path d="M4.5,15C5,20 10,25 21,25" fill="none" stroke="#2a2d30" stroke-width="1.1"/><path d="M17,6L21,5" stroke="#2a2d30" stroke-width="1.1"/><g fill="#fff" stroke="#e04878" stroke-width="1.5"><circle cx="4.5" cy="13" r="2.3"/><circle cx="23" cy="5" r="2.3"/><circle cx="23" cy="25" r="2.3"/></g></svg>
<div style="left:1311px;top:952px;width:37px;height:35px;background:#c3dcf2;border:1px solid #9fcaf3;border-radius:3px;"></div>
<div style="left:1347px;top:952px;width:16px;height:35px;background:#c3dcf2;border:1px solid #9fcaf3;border-radius:3px;"></div>
<svg style="position:absolute;left:1316px;top:956px;" width="28" height="28" viewBox="0 0 28 28"><rect x="2" y="2" width="23" height="23" fill="#dcd6ea" stroke="#474c52" stroke-width="1.6"/><rect x="10" y="10" width="7" height="7" fill="#e04878"/></svg>
<svg style="position:absolute;left:1350px;top:968px;" width="10" height="6" viewBox="0 0 10 6"><path d="M0.5,0.5H9.5L5,5.5Z" fill="#000"/></svg>
<div style="left:1363px;top:952px;width:37px;height:35px;background:#c3dcf2;border:1px solid #9fcaf3;border-radius:3px;"></div>
<div style="left:1399px;top:952px;width:16px;height:35px;background:#c3dcf2;border:1px solid #9fcaf3;border-radius:3px;"></div>
<svg style="position:absolute;left:1366px;top:955px;" width="30" height="30" viewBox="0 0 30 30"><path d="M23,5C12,5 5,9 4.5,15C5,21 12,25 23,25Z" fill="#ccd6ee"/><path d="M23,5C12,5 5,9 4.5,15C5,21 12,25 23,25" fill="none" stroke="#2a2d30" stroke-width="1.1"/><g fill="#fff" stroke="#e04878" stroke-width="1.5"><circle cx="4.5" cy="15" r="2.3"/><circle cx="23" cy="5" r="2.3"/><circle cx="23" cy="25" r="2.3"/></g></svg>
<svg style="position:absolute;left:1403px;top:968px;" width="10" height="6" viewBox="0 0 10 6"><path d="M0.5,0.5H9.5L5,5.5Z" fill="#000"/></svg>
<svg style="position:absolute;left:1417px;top:958px;" width="32" height="24" viewBox="0 0 32 24"><path d="M2,20L11,11H29L20,21H4Z" fill="#f6e0e6" stroke="#3a3e44" stroke-width="1.3" stroke-linejoin="round"/><path d="M14,1.5V14M14,14L22,14M14,14L9,19" stroke="#e04878" stroke-width="1.5"/></svg>
<svg style="position:absolute;left:1456px;top:964px;" width="8" height="12" viewBox="0 0 8 12"><path d="M1.2,1L6.5,6L1.2,11" fill="none" stroke="#222" stroke-width="1.5"/></svg>
<svg style="position:absolute;left:1600px;top:960px;" width="276" height="46" viewBox="0 0 276 46"><g transform="translate(90.7,18.700000000000045)"><path d="M4,2.5H13M1.5,7H15.5M8,7L3.5,15.5L14,14.5M11.5,11.5L14.5,16" stroke="#ffffff" stroke-width="1.5" fill="none" stroke-linecap="square" opacity="0.9"/></g><g transform="translate(90,18)"><path d="M4,2.5H13M1.5,7H15.5M8,7L3.5,15.5L14,14.5M11.5,11.5L14.5,16" stroke="#8e8e8e" stroke-width="1.5" fill="none" stroke-linecap="square"/></g><g transform="translate(110.7,18.700000000000045)"><path d="M6,1.5L1,8M6,1.5L10,6M3,8H9V12H3V16.5H10M13,2.5V12M16,1V17L14.5,16.5" stroke="#ffffff" stroke-width="1.5" fill="none" stroke-linecap="square" opacity="0.9"/></g><g transform="translate(110,18)"><path d="M6,1.5L1,8M6,1.5L10,6M3,8H9V12H3V16.5H10M13,2.5V12M16,1V17L14.5,16.5" stroke="#8e8e8e" stroke-width="1.5" fill="none" stroke-linecap="square"/></g><g transform="translate(134.7,18.700000000000045)"><path d="M4,1L1.5,5.5H5L1.5,10H6M1.5,16L6,13.5M8,4H16M12,1V8M9,8H15M9,10.5H15V16.5H9Z" stroke="#ffffff" stroke-width="1.5" fill="none" stroke-linecap="square" opacity="0.9"/></g><g transform="translate(134,18)"><path d="M4,1L1.5,5.5H5L1.5,10H6M1.5,16L6,13.5M8,4H16M12,1V8M9,8H15M9,10.5H15V16.5H9Z" stroke="#8e8e8e" stroke-width="1.5" fill="none" stroke-linecap="square"/></g><g transform="translate(153.7,18.700000000000045)"><path d="M1,5H7M4,1V17M4,6L1,12M4,6L7,10M10,1L8.5,6M9.5,4H16V16.5L14.5,16M11.5,7L10,13H14" stroke="#ffffff" stroke-width="1.5" fill="none" stroke-linecap="square" opacity="0.9"/></g><g transform="translate(153,18)"><path d="M1,5H7M4,1V17M4,6L1,12M4,6L7,10M10,1L8.5,6M9.5,4H16V16.5L14.5,16M11.5,7L10,13H14" stroke="#8e8e8e" stroke-width="1.5" fill="none" stroke-linecap="square"/></g><g transform="translate(172.7,18.700000000000045)"><path d="M1,6H6M3.5,1V17M7,5H15V15L13.5,16M10.5,2C10.5,9 9.5,13 7,16.5M8,9L7,12M15.5,9L16.5,12" stroke="#ffffff" stroke-width="1.5" fill="none" stroke-linecap="square" opacity="0.9"/></g><g transform="translate(172,18)"><path d="M1,6H6M3.5,1V17M7,5H15V15L13.5,16M10.5,2C10.5,9 9.5,13 7,16.5M8,9L7,12M15.5,9L16.5,12" stroke="#8e8e8e" stroke-width="1.5" fill="none" stroke-linecap="square"/></g><g transform="translate(190.7,18.700000000000045)"><path d="M8.5,1L1,7.5M8.5,1L16,7.5M5,7H12M1.5,10.5H15.5M8,10.5L3.5,16H14M11.5,13L14.5,17" stroke="#ffffff" stroke-width="1.5" fill="none" stroke-linecap="square" opacity="0.9"/></g><g transform="translate(190,18)"><path d="M8.5,1L1,7.5M8.5,1L16,7.5M5,7H12M1.5,10.5H15.5M8,10.5L3.5,16H14M11.5,13L14.5,17" stroke="#8e8e8e" stroke-width="1.5" fill="none" stroke-linecap="square"/></g><path d="M210,28H217" stroke="#8e8e8e" stroke-width="1.5" fill="none" stroke-linecap="square"/><g transform="translate(220.7,18.700000000000045)"><path d="M1.5,4H15.5M8.5,1V9M8,4L2,9M9,4L15,9M4,10.5H13L8.5,13M1.5,13.5H15.5M8.5,13V17L7,16.5" stroke="#ffffff" stroke-width="1.5" fill="none" stroke-linecap="square" opacity="0.9"/></g><g transform="translate(220,18)"><path d="M1.5,4H15.5M8.5,1V9M8,4L2,9M9,4L15,9M4,10.5H13L8.5,13M1.5,13.5H15.5M8.5,13V17L7,16.5" stroke="#8e8e8e" stroke-width="1.5" fill="none" stroke-linecap="square"/></g><g transform="translate(241.7,18.700000000000045)"><path d="M1,2H7M3.5,2L1.5,9M2.5,8H7V15H2.5ZM9,2H16.5M12.5,2L11.5,5M9.5,5H15.5V13H9.5ZM12.5,7V11.5M11.5,13L9,16.5M13.5,13L16.5,16.5" stroke="#ffffff" stroke-width="1.5" fill="none" stroke-linecap="square" opacity="0.9"/></g><g transform="translate(241,18)"><path d="M1,2H7M3.5,2L1.5,9M2.5,8H7V15H2.5ZM9,2H16.5M12.5,2L11.5,5M9.5,5H15.5V13H9.5ZM12.5,7V11.5M11.5,13L9,16.5M13.5,13L16.5,16.5" stroke="#8e8e8e" stroke-width="1.5" fill="none" stroke-linecap="square"/></g><rect x="128" y="22" width="4" height="12" fill="none" stroke="#9a9a9a" stroke-width="1"/></svg>
<div class="s" style="left:1617px;top:976px;font-size:19.5px;line-height:22px;color:#8e8e8e;text-shadow:0.8px 0.8px 0 #fff;letter-spacing:-0.9px">CSDN @</div>
<svg style="position:absolute;left:1848px;top:997px;" width="16" height="9" viewBox="0 0 16 9"><path d="M1,0H14L7.5,9Z" fill="#666"/></svg></body></html>
